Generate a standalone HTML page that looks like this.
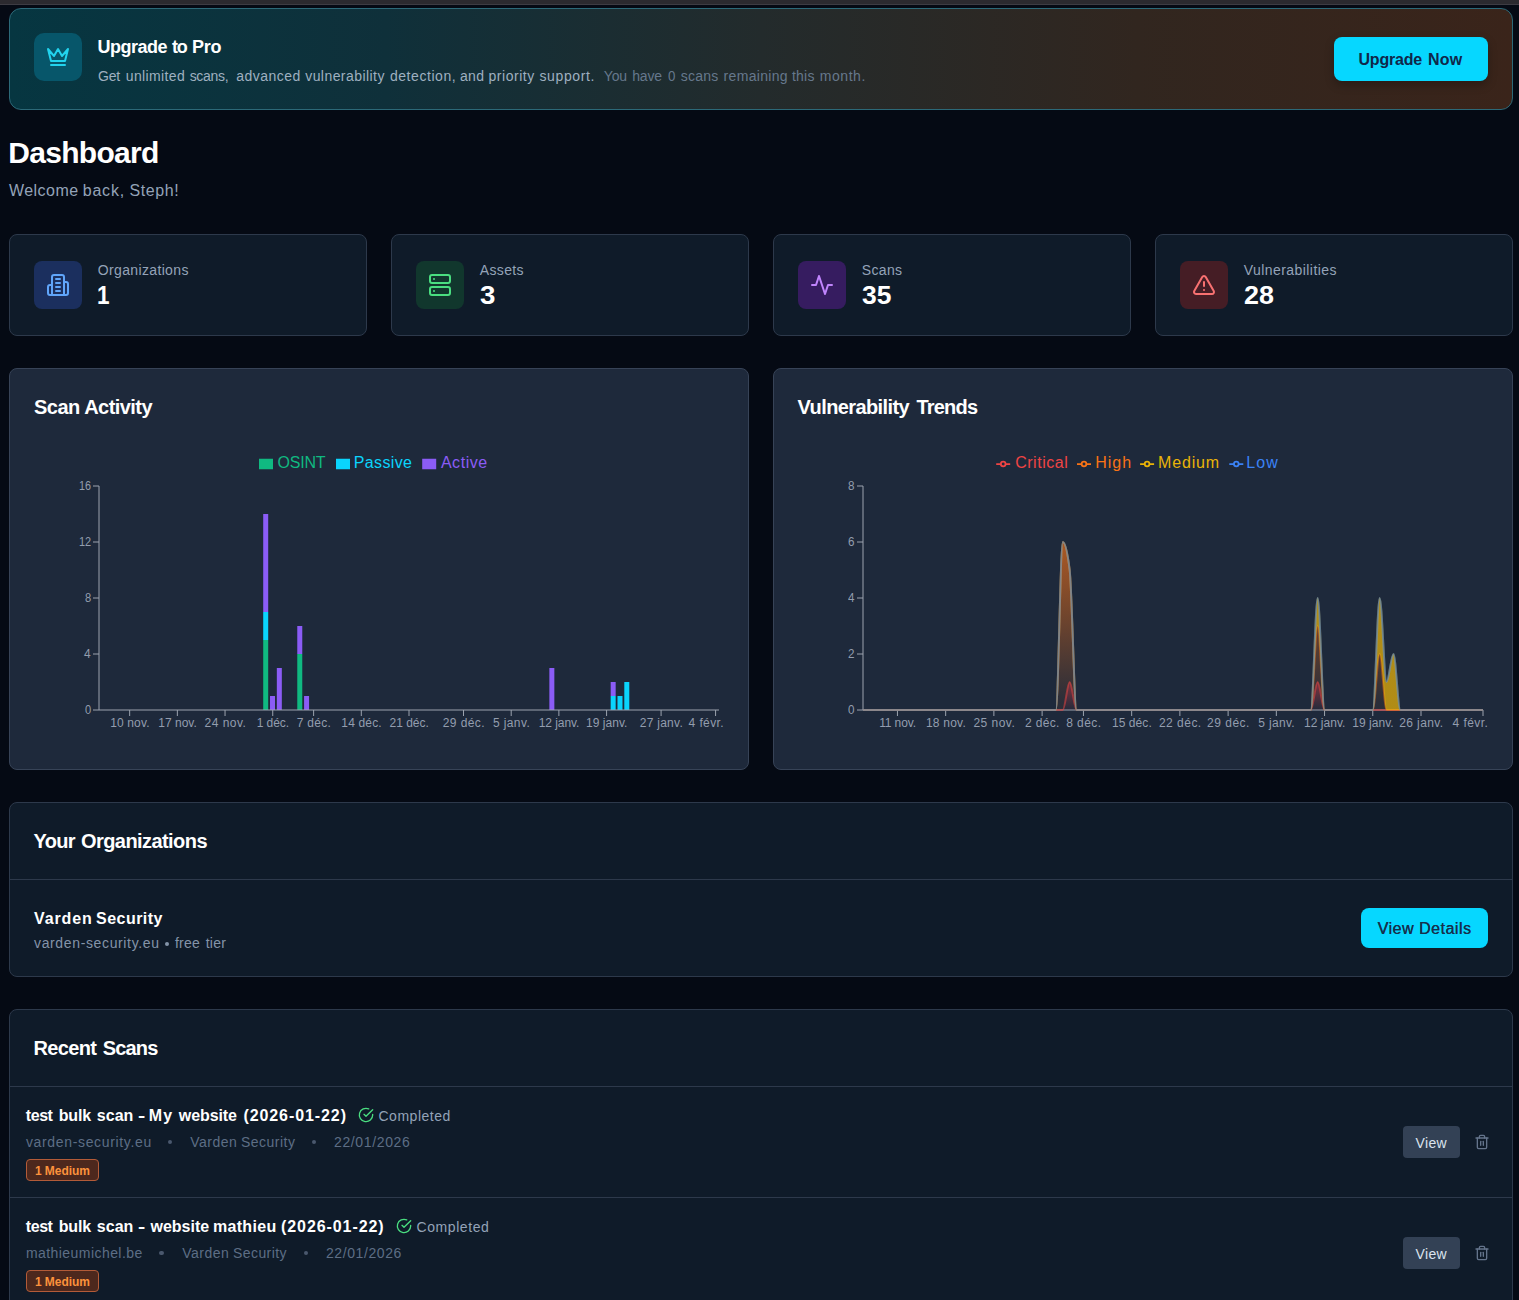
<!DOCTYPE html>
<html lang="en"><head><meta charset="utf-8"><title>Dashboard</title>
<style>
html,body{margin:0;padding:0}
body{width:1519px;height:1300px;overflow:hidden;position:relative;background:#050a14;font-family:"Liberation Sans",sans-serif;}
.t{position:absolute;white-space:nowrap;line-height:1;font-family:"Liberation Sans",sans-serif;}
.b{position:absolute;box-sizing:border-box;}
svg{position:absolute;overflow:visible}
.ic{fill:none;stroke-width:2;stroke-linecap:round;stroke-linejoin:round}
</style></head><body>
<div class="b" style="left:0;top:0;width:1519px;height:4px;background:#2b2a2f"></div>
<div class="b" style="left:0;top:4px;width:1519px;height:1px;background:#3d3c43"></div>
<div class="b" style="left:9px;top:8px;width:1504px;height:102px;border-radius:12px;border:1px solid #2c6978;background:linear-gradient(90deg,#063641 0%,#0f303a 25%,#232b2c 50%,#31261f 75%,#3a241a 100%)"></div>
<div class="b" style="left:34px;top:33px;width:48px;height:48px;border-radius:10px;background:#07566a"></div>
<svg class="ic" style="left:46px;top:45px" width="24" height="24" viewBox="0 0 24 24" stroke="#22d3ee"><path d="m2 4 3 12h14l3-12-6 7-4-7-4 7-6-7z"/><path d="M5 20h14"/></svg>
<div class="t" style="left:97.40px;top:38.00px;font-size:18px;font-weight:700;color:#ffffff;letter-spacing:-0.483px;">Upgrade </div>
<div class="t" style="left:171.90px;top:38.00px;font-size:18px;font-weight:700;color:#ffffff;letter-spacing:-1.094px;">to </div>
<div class="t" style="left:192.10px;top:38.00px;font-size:18px;font-weight:700;color:#ffffff;letter-spacing:-0.255px;">Pro</div>
<div class="t" style="left:98.10px;top:69.00px;font-size:14px;font-weight:400;color:#9fb0c0;letter-spacing:-0.238px;">Get </div>
<div class="t" style="left:125.80px;top:69.00px;font-size:14px;font-weight:400;color:#9fb0c0;letter-spacing:0.37px;">unlimited </div>
<div class="t" style="left:189.70px;top:69.00px;font-size:14px;font-weight:400;color:#9fb0c0;letter-spacing:-0.314px;">scans, </div>
<div class="t" style="left:236.20px;top:69.00px;font-size:14px;font-weight:400;color:#9fb0c0;letter-spacing:0.496px;">advanced </div>
<div class="t" style="left:305.20px;top:69.00px;font-size:14px;font-weight:400;color:#9fb0c0;letter-spacing:0.44px;">vulnerability </div>
<div class="t" style="left:389.90px;top:69.00px;font-size:14px;font-weight:400;color:#9fb0c0;letter-spacing:0.564px;">detection, </div>
<div class="t" style="left:459.90px;top:69.00px;font-size:14px;font-weight:400;color:#9fb0c0;letter-spacing:0.364px;">and </div>
<div class="t" style="left:488.50px;top:69.00px;font-size:14px;font-weight:400;color:#9fb0c0;letter-spacing:0.528px;">priority </div>
<div class="t" style="left:539.50px;top:69.00px;font-size:14px;font-weight:400;color:#9fb0c0;letter-spacing:0.601px;">support.</div>
<div class="t" style="left:603.80px;top:69.00px;font-size:14px;font-weight:400;color:#66788c;letter-spacing:-0.219px;">You </div>
<div class="t" style="left:632.20px;top:69.00px;font-size:14px;font-weight:400;color:#66788c;letter-spacing:-0.191px;">have </div>
<div class="t" style="left:667.80px;top:69.00px;font-size:14px;font-weight:400;color:#66788c;letter-spacing:0px;transform:scaleX(0.9500);transform-origin:0 0;">0 </div>
<div class="t" style="left:680.70px;top:69.00px;font-size:14px;font-weight:400;color:#66788c;letter-spacing:0.257px;">scans </div>
<div class="t" style="left:723.60px;top:69.00px;font-size:14px;font-weight:400;color:#66788c;letter-spacing:0.314px;">remaining </div>
<div class="t" style="left:792.00px;top:69.00px;font-size:14px;font-weight:400;color:#66788c;letter-spacing:0.205px;">this </div>
<div class="t" style="left:819.70px;top:69.00px;font-size:14px;font-weight:400;color:#66788c;letter-spacing:0.578px;">month.</div>
<div class="b" style="left:1334px;top:37px;width:154px;height:44px;border-radius:8px;background:#06d7ff;box-shadow:0 4px 10px rgba(0,0,0,0.25)"></div>
<div class="t" style="left:1358.50px;top:52.00px;font-size:16px;font-weight:700;color:#10274a;letter-spacing:-0.217px;">Upgrade </div>
<div class="t" style="left:1428.00px;top:52.00px;font-size:16px;font-weight:700;color:#10274a;letter-spacing:0.236px;">Now</div>
<div class="t" style="left:8.20px;top:138.00px;font-size:30px;font-weight:700;color:#ffffff;letter-spacing:-0.696px;">Dashboard</div>
<div class="t" style="left:9.00px;top:183.00px;font-size:16px;font-weight:400;color:#94a3b8;letter-spacing:0.451px;">Welcome </div>
<div class="t" style="left:82.70px;top:183.00px;font-size:16px;font-weight:400;color:#94a3b8;letter-spacing:0.801px;">back, </div>
<div class="t" style="left:129.60px;top:183.00px;font-size:16px;font-weight:400;color:#94a3b8;letter-spacing:0.578px;">Steph!</div>
<div class="b" style="left:9px;top:234px;width:358px;height:102px;border-radius:8px;border:1px solid #2d394b;background:#0f1b29"></div>
<div class="b" style="left:34px;top:261px;width:48px;height:48px;border-radius:8px;background:#1b2f5e"></div>
<svg class="ic" style="left:46px;top:273px" width="24" height="24" viewBox="0 0 24 24" stroke="#60a5fa"><path d="M6 22V4a2 2 0 0 1 2-2h8a2 2 0 0 1 2 2v18Z"/><path d="M6 12H4a2 2 0 0 0-2 2v6a2 2 0 0 0 2 2h2"/><path d="M18 9h2a2 2 0 0 1 2 2v9a2 2 0 0 1-2 2h-2"/><path d="M10 6h4"/><path d="M10 10h4"/><path d="M10 14h4"/><path d="M10 18h4"/></svg>
<div class="t" style="left:97.80px;top:263.00px;font-size:14px;font-weight:400;color:#94a3b8;letter-spacing:0.352px;">Organizations</div>
<div class="t" style="left:97.10px;top:283.00px;font-size:25px;font-weight:700;color:#ffffff;letter-spacing:0px;transform:scaleX(0.9000);transform-origin:0 0;">1</div>
<div class="b" style="left:391px;top:234px;width:358px;height:102px;border-radius:8px;border:1px solid #2d394b;background:#0f1b29"></div>
<div class="b" style="left:416px;top:261px;width:48px;height:48px;border-radius:8px;background:#11372d"></div>
<svg class="ic" style="left:428px;top:273px" width="24" height="24" viewBox="0 0 24 24" stroke="#4ade80"><rect width="20" height="8" x="2" y="2" rx="2" ry="2"/><rect width="20" height="8" x="2" y="14" rx="2" ry="2"/><line x1="6" x2="6.01" y1="6" y2="6"/><line x1="6" x2="6.01" y1="18" y2="18"/></svg>
<div class="t" style="left:479.80px;top:263.00px;font-size:14px;font-weight:400;color:#94a3b8;letter-spacing:0.357px;">Assets</div>
<div class="t" style="left:480.00px;top:283.00px;font-size:25px;font-weight:700;color:#ffffff;letter-spacing:0px;transform:scaleX(1.1077);transform-origin:0 0;">3</div>
<div class="b" style="left:773px;top:234px;width:358px;height:102px;border-radius:8px;border:1px solid #2d394b;background:#0f1b29"></div>
<div class="b" style="left:798px;top:261px;width:48px;height:48px;border-radius:8px;background:#361c60"></div>
<svg class="ic" style="left:810px;top:273px" width="24" height="24" viewBox="0 0 24 24" stroke="#c084fc"><path d="M22 12h-4l-3 9L9 3l-3 9H2"/></svg>
<div class="t" style="left:861.80px;top:263.00px;font-size:14px;font-weight:400;color:#94a3b8;letter-spacing:0.322px;">Scans</div>
<div class="t" style="left:862.00px;top:283.00px;font-size:25px;font-weight:700;color:#ffffff;letter-spacing:0px;transform:scaleX(1.0572);transform-origin:0 0;">35</div>
<div class="b" style="left:1155px;top:234px;width:358px;height:102px;border-radius:8px;border:1px solid #2d394b;background:#0f1b29"></div>
<div class="b" style="left:1180px;top:261px;width:48px;height:48px;border-radius:8px;background:#451d25"></div>
<svg class="ic" style="left:1192px;top:273px" width="24" height="24" viewBox="0 0 24 24" stroke="#f87171"><path d="m21.73 18-8-14a2 2 0 0 0-3.48 0l-8 14A2 2 0 0 0 4 21h16a2 2 0 0 0 1.73-3Z"/><path d="M12 9v4"/><path d="M12 17h.01"/></svg>
<div class="t" style="left:1243.80px;top:263.00px;font-size:14px;font-weight:400;color:#94a3b8;letter-spacing:0.433px;">Vulnerabilities</div>
<div class="t" style="left:1244.00px;top:283.00px;font-size:25px;font-weight:700;color:#ffffff;letter-spacing:0px;transform:scaleX(1.0751);transform-origin:0 0;">28</div>
<div class="b" style="left:9px;top:368px;width:740px;height:402px;border-radius:8px;border:1px solid #374357;background:#1e293b"></div>
<div class="t" style="left:34.00px;top:397.00px;font-size:20px;font-weight:700;color:#ffffff;letter-spacing:-0.529px;">Scan </div>
<div class="t" style="left:84.20px;top:397.00px;font-size:20px;font-weight:700;color:#ffffff;letter-spacing:-0.546px;">Activity</div>
<div class="b" style="left:773px;top:368px;width:740px;height:402px;border-radius:8px;border:1px solid #374357;background:#1e293b"></div>
<div class="t" style="left:797.60px;top:397.00px;font-size:20px;font-weight:700;color:#ffffff;letter-spacing:-0.605px;">Vulnerability </div>
<div class="t" style="left:916.40px;top:397.00px;font-size:20px;font-weight:700;color:#ffffff;letter-spacing:-0.771px;">Trends</div>
<svg style="left:0;top:0" width="1519" height="1300" viewBox="0 0 1519 1300">
<rect x="263.198" y="640" width="5" height="70" fill="#10b981"/>
<rect x="263.198" y="612" width="5" height="28" fill="#0ad4fd"/>
<rect x="263.198" y="514" width="5" height="98" fill="#8b5cf6"/>
<rect x="270.011" y="696" width="5" height="14" fill="#8b5cf6"/>
<rect x="276.824" y="668" width="5" height="42" fill="#8b5cf6"/>
<rect x="297.264" y="654" width="5" height="56" fill="#10b981"/>
<rect x="297.264" y="626" width="5" height="28" fill="#8b5cf6"/>
<rect x="304.077" y="696" width="5" height="14" fill="#8b5cf6"/>
<rect x="549.352" y="668" width="5" height="42" fill="#8b5cf6"/>
<rect x="610.670" y="696" width="5" height="14" fill="#0ad4fd"/>
<rect x="610.670" y="682" width="5" height="14" fill="#8b5cf6"/>
<rect x="617.484" y="696" width="5" height="14" fill="#0ad4fd"/>
<rect x="624.297" y="682" width="5" height="28" fill="#0ad4fd"/>
<g stroke="#9ca3af" stroke-width="1" fill="none">
<line x1="99" y1="710" x2="719" y2="710"/>
<line x1="99" y1="486" x2="99" y2="710"/>
<line x1="93" y1="710" x2="99" y2="710"/>
<line x1="93" y1="654" x2="99" y2="654"/>
<line x1="93" y1="598" x2="99" y2="598"/>
<line x1="93" y1="542" x2="99" y2="542"/>
<line x1="93" y1="486" x2="99" y2="486"/>
<line x1="129.659" y1="710" x2="129.659" y2="716"/>
<line x1="177.352" y1="710" x2="177.352" y2="716"/>
<line x1="225.044" y1="710" x2="225.044" y2="716"/>
<line x1="272.736" y1="710" x2="272.736" y2="716"/>
<line x1="313.615" y1="710" x2="313.615" y2="716"/>
<line x1="361.308" y1="710" x2="361.308" y2="716"/>
<line x1="409.000" y1="710" x2="409.000" y2="716"/>
<line x1="463.505" y1="710" x2="463.505" y2="716"/>
<line x1="511.198" y1="710" x2="511.198" y2="716"/>
<line x1="558.890" y1="710" x2="558.890" y2="716"/>
<line x1="606.582" y1="710" x2="606.582" y2="716"/>
<line x1="661.088" y1="710" x2="661.088" y2="716"/>
<line x1="715.593" y1="710" x2="715.593" y2="716"/>
</g>
<rect x="259" y="458.75" width="14" height="10.5" fill="#10b981"/>
<rect x="336" y="458.75" width="14" height="10.5" fill="#0ad4fd"/>
<rect x="422.2" y="458.75" width="14" height="10.5" fill="#8b5cf6"/>
</svg>
<div class="t" style="left:110.16px;top:717.00px;font-size:12px;font-weight:400;color:#939dae;letter-spacing:0.144px;">10 nov.</div>
<div class="t" style="left:158.20px;top:717.00px;font-size:12px;font-weight:400;color:#939dae;letter-spacing:0.027px;">17 nov.</div>
<div class="t" style="left:204.59px;top:717.00px;font-size:12px;font-weight:400;color:#939dae;letter-spacing:0.46px;">24 nov.</div>
<div class="t" style="left:256.64px;top:717.00px;font-size:12px;font-weight:400;color:#939dae;letter-spacing:-0.031px;">1 déc.</div>
<div class="t" style="left:296.67px;top:717.00px;font-size:12px;font-weight:400;color:#939dae;letter-spacing:0.309px;">7 déc.</div>
<div class="t" style="left:341.31px;top:717.00px;font-size:12px;font-weight:400;color:#939dae;letter-spacing:0.162px;">14 déc.</div>
<div class="t" style="left:389.50px;top:717.00px;font-size:12px;font-weight:400;color:#939dae;letter-spacing:-0.005px;">21 déc.</div>
<div class="t" style="left:442.76px;top:717.00px;font-size:12px;font-weight:400;color:#939dae;letter-spacing:0.412px;">29 déc.</div>
<div class="t" style="left:493.00px;top:717.00px;font-size:12px;font-weight:400;color:#939dae;letter-spacing:0.378px;">5 janv.</div>
<div class="t" style="left:538.69px;top:717.00px;font-size:12px;font-weight:400;color:#939dae;letter-spacing:-0.058px;">12 janv.</div>
<div class="t" style="left:586.03px;top:717.00px;font-size:12px;font-weight:400;color:#939dae;letter-spacing:0.042px;">19 janv.</div>
<div class="t" style="left:639.79px;top:717.00px;font-size:12px;font-weight:400;color:#939dae;letter-spacing:0.256px;">27 janv.</div>
<div class="t" style="left:688.60px;top:717.00px;font-size:12px;font-weight:400;color:#939dae;letter-spacing:0.392px;">4 févr.</div>
<div class="t" style="left:84.50px;top:704.00px;font-size:12px;font-weight:400;color:#939dae;letter-spacing:0px;transform:scaleX(0.9286);transform-origin:0 0;">0</div>
<div class="t" style="left:84.00px;top:648.00px;font-size:12px;font-weight:400;color:#939dae;letter-spacing:0px;transform:scaleX(1.0000);transform-origin:0 0;">4</div>
<div class="t" style="left:84.50px;top:592.00px;font-size:12px;font-weight:400;color:#939dae;letter-spacing:0px;transform:scaleX(0.9286);transform-origin:0 0;">8</div>
<div class="t" style="left:78.50px;top:536.00px;font-size:12px;font-weight:400;color:#939dae;letter-spacing:0px;transform:scaleX(0.9142);transform-origin:0 0;">12</div>
<div class="t" style="left:79.00px;top:480.00px;font-size:12px;font-weight:400;color:#939dae;letter-spacing:0px;transform:scaleX(0.9000);transform-origin:0 0;">16</div>
<div class="t" style="left:277.60px;top:455.00px;font-size:16px;font-weight:400;color:#10b981;letter-spacing:-0.254px;">OSINT</div>
<div class="t" style="left:353.70px;top:455.00px;font-size:16px;font-weight:400;color:#0ad4fd;letter-spacing:0.379px;">Passive</div>
<div class="t" style="left:440.90px;top:455.00px;font-size:16px;font-weight:400;color:#8b5cf6;letter-spacing:0.546px;">Active</div>
<svg style="left:0;top:0" width="1519" height="1300" viewBox="0 0 1519 1300">
<defs>
<linearGradient id="gC" x1="0" y1="0" x2="0" y2="1"><stop offset="5%" stop-color="#ef4444" stop-opacity="0.45"/><stop offset="95%" stop-color="#ef4444" stop-opacity="0.05"/></linearGradient>
<linearGradient id="gH" x1="0" y1="0" x2="0" y2="1"><stop offset="5%" stop-color="#f97316" stop-opacity="0.62"/><stop offset="95%" stop-color="#f97316" stop-opacity="0.06"/></linearGradient>
<linearGradient id="gM" x1="0" y1="0" x2="0" y2="1"><stop offset="5%" stop-color="#eab308" stop-opacity="0.72"/><stop offset="95%" stop-color="#eab308" stop-opacity="0.72"/></linearGradient>
<linearGradient id="gL" x1="0" y1="0" x2="0" y2="1"><stop offset="5%" stop-color="#3b82f6" stop-opacity="0.62"/><stop offset="95%" stop-color="#3b82f6" stop-opacity="0.06"/></linearGradient>
</defs>
<g stroke="#9ca3af" stroke-width="1" fill="none">
<line x1="863" y1="710" x2="1483" y2="710"/>
<line x1="863" y1="486" x2="863" y2="710"/>
<line x1="857" y1="710" x2="863" y2="710"/>
<line x1="857" y1="654" x2="863" y2="654"/>
<line x1="857" y1="598" x2="863" y2="598"/>
<line x1="857" y1="542" x2="863" y2="542"/>
<line x1="857" y1="486" x2="863" y2="486"/>
<line x1="897.444" y1="710" x2="897.444" y2="716"/>
<line x1="945.667" y1="710" x2="945.667" y2="716"/>
<line x1="993.889" y1="710" x2="993.889" y2="716"/>
<line x1="1042.111" y1="710" x2="1042.111" y2="716"/>
<line x1="1083.444" y1="710" x2="1083.444" y2="716"/>
<line x1="1131.667" y1="710" x2="1131.667" y2="716"/>
<line x1="1179.889" y1="710" x2="1179.889" y2="716"/>
<line x1="1228.111" y1="710" x2="1228.111" y2="716"/>
<line x1="1276.333" y1="710" x2="1276.333" y2="716"/>
<line x1="1324.556" y1="710" x2="1324.556" y2="716"/>
<line x1="1372.778" y1="710" x2="1372.778" y2="716"/>
<line x1="1421.000" y1="710" x2="1421.000" y2="716"/>
<line x1="1483.000" y1="710" x2="1483.000" y2="716"/>
</g>
<path d="M863.000,710.000C865.296,710.000,867.593,710.000,869.889,710.000C872.185,710.000,874.481,710.000,876.778,710.000C879.074,710.000,881.370,710.000,883.667,710.000C885.963,710.000,888.259,710.000,890.556,710.000C892.852,710.000,895.148,710.000,897.444,710.000C899.741,710.000,902.037,710.000,904.333,710.000C906.630,710.000,908.926,710.000,911.222,710.000C913.519,710.000,915.815,710.000,918.111,710.000C920.407,710.000,922.704,710.000,925.000,710.000C927.296,710.000,929.593,710.000,931.889,710.000C934.185,710.000,936.481,710.000,938.778,710.000C941.074,710.000,943.370,710.000,945.667,710.000C947.963,710.000,950.259,710.000,952.556,710.000C954.852,710.000,957.148,710.000,959.444,710.000C961.741,710.000,964.037,710.000,966.333,710.000C968.630,710.000,970.926,710.000,973.222,710.000C975.519,710.000,977.815,710.000,980.111,710.000C982.407,710.000,984.704,710.000,987.000,710.000C989.296,710.000,991.593,710.000,993.889,710.000C996.185,710.000,998.481,710.000,1000.778,710.000C1003.074,710.000,1005.370,710.000,1007.667,710.000C1009.963,710.000,1012.259,710.000,1014.556,710.000C1016.852,710.000,1019.148,710.000,1021.444,710.000C1023.741,710.000,1026.037,710.000,1028.333,710.000C1030.630,710.000,1032.926,710.000,1035.222,710.000C1037.519,710.000,1039.815,710.000,1042.111,710.000C1044.407,710.000,1046.704,710.000,1049.000,710.000C1051.296,710.000,1053.593,710.000,1055.889,710.000C1058.185,710.000,1060.481,710.000,1062.778,710.000C1065.074,710.000,1067.370,682.000,1069.667,682.000C1071.963,682.000,1074.259,710.000,1076.556,710.000C1078.852,710.000,1081.148,710.000,1083.444,710.000C1085.741,710.000,1088.037,710.000,1090.333,710.000C1092.630,710.000,1094.926,710.000,1097.222,710.000C1099.519,710.000,1101.815,710.000,1104.111,710.000C1106.407,710.000,1108.704,710.000,1111.000,710.000C1113.296,710.000,1115.593,710.000,1117.889,710.000C1120.185,710.000,1122.481,710.000,1124.778,710.000C1127.074,710.000,1129.370,710.000,1131.667,710.000C1133.963,710.000,1136.259,710.000,1138.556,710.000C1140.852,710.000,1143.148,710.000,1145.444,710.000C1147.741,710.000,1150.037,710.000,1152.333,710.000C1154.630,710.000,1156.926,710.000,1159.222,710.000C1161.519,710.000,1163.815,710.000,1166.111,710.000C1168.407,710.000,1170.704,710.000,1173.000,710.000C1175.296,710.000,1177.593,710.000,1179.889,710.000C1182.185,710.000,1184.481,710.000,1186.778,710.000C1189.074,710.000,1191.370,710.000,1193.667,710.000C1195.963,710.000,1198.259,710.000,1200.556,710.000C1202.852,710.000,1205.148,710.000,1207.444,710.000C1209.741,710.000,1212.037,710.000,1214.333,710.000C1216.630,710.000,1218.926,710.000,1221.222,710.000C1223.519,710.000,1225.815,710.000,1228.111,710.000C1230.407,710.000,1232.704,710.000,1235.000,710.000C1237.296,710.000,1239.593,710.000,1241.889,710.000C1244.185,710.000,1246.481,710.000,1248.778,710.000C1251.074,710.000,1253.370,710.000,1255.667,710.000C1257.963,710.000,1260.259,710.000,1262.556,710.000C1264.852,710.000,1267.148,710.000,1269.444,710.000C1271.741,710.000,1274.037,710.000,1276.333,710.000C1278.630,710.000,1280.926,710.000,1283.222,710.000C1285.519,710.000,1287.815,710.000,1290.111,710.000C1292.407,710.000,1294.704,710.000,1297.000,710.000C1299.296,710.000,1301.593,710.000,1303.889,710.000C1306.185,710.000,1308.481,710.000,1310.778,710.000C1313.074,710.000,1315.370,682.000,1317.667,682.000C1319.963,682.000,1322.259,710.000,1324.556,710.000C1326.852,710.000,1329.148,710.000,1331.444,710.000C1333.741,710.000,1336.037,710.000,1338.333,710.000C1340.630,710.000,1342.926,710.000,1345.222,710.000C1347.519,710.000,1349.815,710.000,1352.111,710.000C1354.407,710.000,1356.704,710.000,1359.000,710.000C1361.296,710.000,1363.593,710.000,1365.889,710.000C1368.185,710.000,1370.481,710.000,1372.778,710.000C1375.074,710.000,1377.370,710.000,1379.667,710.000C1381.963,710.000,1384.259,710.000,1386.556,710.000C1388.852,710.000,1391.148,710.000,1393.444,710.000C1395.741,710.000,1398.037,710.000,1400.333,710.000C1402.630,710.000,1404.926,710.000,1407.222,710.000C1409.519,710.000,1411.815,710.000,1414.111,710.000C1416.407,710.000,1418.704,710.000,1421.000,710.000C1423.296,710.000,1425.593,710.000,1427.889,710.000C1430.185,710.000,1432.481,710.000,1434.778,710.000C1437.074,710.000,1439.370,710.000,1441.667,710.000C1443.963,710.000,1446.259,710.000,1448.556,710.000C1450.852,710.000,1453.148,710.000,1455.444,710.000C1457.741,710.000,1460.037,710.000,1462.333,710.000C1464.630,710.000,1466.926,710.000,1469.222,710.000C1471.519,710.000,1473.815,710.000,1476.111,710.000C1478.407,710.000,1480.704,710.000,1483.000,710.000L1483.000,710.000C1480.704,710.000,1478.407,710.000,1476.111,710.000C1473.815,710.000,1471.519,710.000,1469.222,710.000C1466.926,710.000,1464.630,710.000,1462.333,710.000C1460.037,710.000,1457.741,710.000,1455.444,710.000C1453.148,710.000,1450.852,710.000,1448.556,710.000C1446.259,710.000,1443.963,710.000,1441.667,710.000C1439.370,710.000,1437.074,710.000,1434.778,710.000C1432.481,710.000,1430.185,710.000,1427.889,710.000C1425.593,710.000,1423.296,710.000,1421.000,710.000C1418.704,710.000,1416.407,710.000,1414.111,710.000C1411.815,710.000,1409.519,710.000,1407.222,710.000C1404.926,710.000,1402.630,710.000,1400.333,710.000C1398.037,710.000,1395.741,710.000,1393.444,710.000C1391.148,710.000,1388.852,710.000,1386.556,710.000C1384.259,710.000,1381.963,710.000,1379.667,710.000C1377.370,710.000,1375.074,710.000,1372.778,710.000C1370.481,710.000,1368.185,710.000,1365.889,710.000C1363.593,710.000,1361.296,710.000,1359.000,710.000C1356.704,710.000,1354.407,710.000,1352.111,710.000C1349.815,710.000,1347.519,710.000,1345.222,710.000C1342.926,710.000,1340.630,710.000,1338.333,710.000C1336.037,710.000,1333.741,710.000,1331.444,710.000C1329.148,710.000,1326.852,710.000,1324.556,710.000C1322.259,710.000,1319.963,710.000,1317.667,710.000C1315.370,710.000,1313.074,710.000,1310.778,710.000C1308.481,710.000,1306.185,710.000,1303.889,710.000C1301.593,710.000,1299.296,710.000,1297.000,710.000C1294.704,710.000,1292.407,710.000,1290.111,710.000C1287.815,710.000,1285.519,710.000,1283.222,710.000C1280.926,710.000,1278.630,710.000,1276.333,710.000C1274.037,710.000,1271.741,710.000,1269.444,710.000C1267.148,710.000,1264.852,710.000,1262.556,710.000C1260.259,710.000,1257.963,710.000,1255.667,710.000C1253.370,710.000,1251.074,710.000,1248.778,710.000C1246.481,710.000,1244.185,710.000,1241.889,710.000C1239.593,710.000,1237.296,710.000,1235.000,710.000C1232.704,710.000,1230.407,710.000,1228.111,710.000C1225.815,710.000,1223.519,710.000,1221.222,710.000C1218.926,710.000,1216.630,710.000,1214.333,710.000C1212.037,710.000,1209.741,710.000,1207.444,710.000C1205.148,710.000,1202.852,710.000,1200.556,710.000C1198.259,710.000,1195.963,710.000,1193.667,710.000C1191.370,710.000,1189.074,710.000,1186.778,710.000C1184.481,710.000,1182.185,710.000,1179.889,710.000C1177.593,710.000,1175.296,710.000,1173.000,710.000C1170.704,710.000,1168.407,710.000,1166.111,710.000C1163.815,710.000,1161.519,710.000,1159.222,710.000C1156.926,710.000,1154.630,710.000,1152.333,710.000C1150.037,710.000,1147.741,710.000,1145.444,710.000C1143.148,710.000,1140.852,710.000,1138.556,710.000C1136.259,710.000,1133.963,710.000,1131.667,710.000C1129.370,710.000,1127.074,710.000,1124.778,710.000C1122.481,710.000,1120.185,710.000,1117.889,710.000C1115.593,710.000,1113.296,710.000,1111.000,710.000C1108.704,710.000,1106.407,710.000,1104.111,710.000C1101.815,710.000,1099.519,710.000,1097.222,710.000C1094.926,710.000,1092.630,710.000,1090.333,710.000C1088.037,710.000,1085.741,710.000,1083.444,710.000C1081.148,710.000,1078.852,710.000,1076.556,710.000C1074.259,710.000,1071.963,710.000,1069.667,710.000C1067.370,710.000,1065.074,710.000,1062.778,710.000C1060.481,710.000,1058.185,710.000,1055.889,710.000C1053.593,710.000,1051.296,710.000,1049.000,710.000C1046.704,710.000,1044.407,710.000,1042.111,710.000C1039.815,710.000,1037.519,710.000,1035.222,710.000C1032.926,710.000,1030.630,710.000,1028.333,710.000C1026.037,710.000,1023.741,710.000,1021.444,710.000C1019.148,710.000,1016.852,710.000,1014.556,710.000C1012.259,710.000,1009.963,710.000,1007.667,710.000C1005.370,710.000,1003.074,710.000,1000.778,710.000C998.481,710.000,996.185,710.000,993.889,710.000C991.593,710.000,989.296,710.000,987.000,710.000C984.704,710.000,982.407,710.000,980.111,710.000C977.815,710.000,975.519,710.000,973.222,710.000C970.926,710.000,968.630,710.000,966.333,710.000C964.037,710.000,961.741,710.000,959.444,710.000C957.148,710.000,954.852,710.000,952.556,710.000C950.259,710.000,947.963,710.000,945.667,710.000C943.370,710.000,941.074,710.000,938.778,710.000C936.481,710.000,934.185,710.000,931.889,710.000C929.593,710.000,927.296,710.000,925.000,710.000C922.704,710.000,920.407,710.000,918.111,710.000C915.815,710.000,913.519,710.000,911.222,710.000C908.926,710.000,906.630,710.000,904.333,710.000C902.037,710.000,899.741,710.000,897.444,710.000C895.148,710.000,892.852,710.000,890.556,710.000C888.259,710.000,885.963,710.000,883.667,710.000C881.370,710.000,879.074,710.000,876.778,710.000C874.481,710.000,872.185,710.000,869.889,710.000C867.593,710.000,865.296,710.000,863.000,710.000Z" fill="url(#gC)" stroke="none"/>
<path d="M863.000,710.000C865.296,710.000,867.593,710.000,869.889,710.000C872.185,710.000,874.481,710.000,876.778,710.000C879.074,710.000,881.370,710.000,883.667,710.000C885.963,710.000,888.259,710.000,890.556,710.000C892.852,710.000,895.148,710.000,897.444,710.000C899.741,710.000,902.037,710.000,904.333,710.000C906.630,710.000,908.926,710.000,911.222,710.000C913.519,710.000,915.815,710.000,918.111,710.000C920.407,710.000,922.704,710.000,925.000,710.000C927.296,710.000,929.593,710.000,931.889,710.000C934.185,710.000,936.481,710.000,938.778,710.000C941.074,710.000,943.370,710.000,945.667,710.000C947.963,710.000,950.259,710.000,952.556,710.000C954.852,710.000,957.148,710.000,959.444,710.000C961.741,710.000,964.037,710.000,966.333,710.000C968.630,710.000,970.926,710.000,973.222,710.000C975.519,710.000,977.815,710.000,980.111,710.000C982.407,710.000,984.704,710.000,987.000,710.000C989.296,710.000,991.593,710.000,993.889,710.000C996.185,710.000,998.481,710.000,1000.778,710.000C1003.074,710.000,1005.370,710.000,1007.667,710.000C1009.963,710.000,1012.259,710.000,1014.556,710.000C1016.852,710.000,1019.148,710.000,1021.444,710.000C1023.741,710.000,1026.037,710.000,1028.333,710.000C1030.630,710.000,1032.926,710.000,1035.222,710.000C1037.519,710.000,1039.815,710.000,1042.111,710.000C1044.407,710.000,1046.704,710.000,1049.000,710.000C1051.296,710.000,1053.593,710.000,1055.889,710.000C1058.185,710.000,1060.481,710.000,1062.778,710.000C1065.074,710.000,1067.370,682.000,1069.667,682.000C1071.963,682.000,1074.259,710.000,1076.556,710.000C1078.852,710.000,1081.148,710.000,1083.444,710.000C1085.741,710.000,1088.037,710.000,1090.333,710.000C1092.630,710.000,1094.926,710.000,1097.222,710.000C1099.519,710.000,1101.815,710.000,1104.111,710.000C1106.407,710.000,1108.704,710.000,1111.000,710.000C1113.296,710.000,1115.593,710.000,1117.889,710.000C1120.185,710.000,1122.481,710.000,1124.778,710.000C1127.074,710.000,1129.370,710.000,1131.667,710.000C1133.963,710.000,1136.259,710.000,1138.556,710.000C1140.852,710.000,1143.148,710.000,1145.444,710.000C1147.741,710.000,1150.037,710.000,1152.333,710.000C1154.630,710.000,1156.926,710.000,1159.222,710.000C1161.519,710.000,1163.815,710.000,1166.111,710.000C1168.407,710.000,1170.704,710.000,1173.000,710.000C1175.296,710.000,1177.593,710.000,1179.889,710.000C1182.185,710.000,1184.481,710.000,1186.778,710.000C1189.074,710.000,1191.370,710.000,1193.667,710.000C1195.963,710.000,1198.259,710.000,1200.556,710.000C1202.852,710.000,1205.148,710.000,1207.444,710.000C1209.741,710.000,1212.037,710.000,1214.333,710.000C1216.630,710.000,1218.926,710.000,1221.222,710.000C1223.519,710.000,1225.815,710.000,1228.111,710.000C1230.407,710.000,1232.704,710.000,1235.000,710.000C1237.296,710.000,1239.593,710.000,1241.889,710.000C1244.185,710.000,1246.481,710.000,1248.778,710.000C1251.074,710.000,1253.370,710.000,1255.667,710.000C1257.963,710.000,1260.259,710.000,1262.556,710.000C1264.852,710.000,1267.148,710.000,1269.444,710.000C1271.741,710.000,1274.037,710.000,1276.333,710.000C1278.630,710.000,1280.926,710.000,1283.222,710.000C1285.519,710.000,1287.815,710.000,1290.111,710.000C1292.407,710.000,1294.704,710.000,1297.000,710.000C1299.296,710.000,1301.593,710.000,1303.889,710.000C1306.185,710.000,1308.481,710.000,1310.778,710.000C1313.074,710.000,1315.370,682.000,1317.667,682.000C1319.963,682.000,1322.259,710.000,1324.556,710.000C1326.852,710.000,1329.148,710.000,1331.444,710.000C1333.741,710.000,1336.037,710.000,1338.333,710.000C1340.630,710.000,1342.926,710.000,1345.222,710.000C1347.519,710.000,1349.815,710.000,1352.111,710.000C1354.407,710.000,1356.704,710.000,1359.000,710.000C1361.296,710.000,1363.593,710.000,1365.889,710.000C1368.185,710.000,1370.481,710.000,1372.778,710.000C1375.074,710.000,1377.370,710.000,1379.667,710.000C1381.963,710.000,1384.259,710.000,1386.556,710.000C1388.852,710.000,1391.148,710.000,1393.444,710.000C1395.741,710.000,1398.037,710.000,1400.333,710.000C1402.630,710.000,1404.926,710.000,1407.222,710.000C1409.519,710.000,1411.815,710.000,1414.111,710.000C1416.407,710.000,1418.704,710.000,1421.000,710.000C1423.296,710.000,1425.593,710.000,1427.889,710.000C1430.185,710.000,1432.481,710.000,1434.778,710.000C1437.074,710.000,1439.370,710.000,1441.667,710.000C1443.963,710.000,1446.259,710.000,1448.556,710.000C1450.852,710.000,1453.148,710.000,1455.444,710.000C1457.741,710.000,1460.037,710.000,1462.333,710.000C1464.630,710.000,1466.926,710.000,1469.222,710.000C1471.519,710.000,1473.815,710.000,1476.111,710.000C1478.407,710.000,1480.704,710.000,1483.000,710.000" fill="none" stroke="#ef4444" stroke-width="2" stroke-opacity="0.5"/>
<path d="M863.000,710.000C865.296,710.000,867.593,710.000,869.889,710.000C872.185,710.000,874.481,710.000,876.778,710.000C879.074,710.000,881.370,710.000,883.667,710.000C885.963,710.000,888.259,710.000,890.556,710.000C892.852,710.000,895.148,710.000,897.444,710.000C899.741,710.000,902.037,710.000,904.333,710.000C906.630,710.000,908.926,710.000,911.222,710.000C913.519,710.000,915.815,710.000,918.111,710.000C920.407,710.000,922.704,710.000,925.000,710.000C927.296,710.000,929.593,710.000,931.889,710.000C934.185,710.000,936.481,710.000,938.778,710.000C941.074,710.000,943.370,710.000,945.667,710.000C947.963,710.000,950.259,710.000,952.556,710.000C954.852,710.000,957.148,710.000,959.444,710.000C961.741,710.000,964.037,710.000,966.333,710.000C968.630,710.000,970.926,710.000,973.222,710.000C975.519,710.000,977.815,710.000,980.111,710.000C982.407,710.000,984.704,710.000,987.000,710.000C989.296,710.000,991.593,710.000,993.889,710.000C996.185,710.000,998.481,710.000,1000.778,710.000C1003.074,710.000,1005.370,710.000,1007.667,710.000C1009.963,710.000,1012.259,710.000,1014.556,710.000C1016.852,710.000,1019.148,710.000,1021.444,710.000C1023.741,710.000,1026.037,710.000,1028.333,710.000C1030.630,710.000,1032.926,710.000,1035.222,710.000C1037.519,710.000,1039.815,710.000,1042.111,710.000C1044.407,710.000,1046.704,710.000,1049.000,710.000C1051.296,710.000,1053.593,710.000,1055.889,710.000C1058.185,710.000,1060.481,542.000,1062.778,542.000C1065.074,542.000,1067.370,551.333,1069.667,570.000C1071.963,588.667,1074.259,710.000,1076.556,710.000C1078.852,710.000,1081.148,710.000,1083.444,710.000C1085.741,710.000,1088.037,710.000,1090.333,710.000C1092.630,710.000,1094.926,710.000,1097.222,710.000C1099.519,710.000,1101.815,710.000,1104.111,710.000C1106.407,710.000,1108.704,710.000,1111.000,710.000C1113.296,710.000,1115.593,710.000,1117.889,710.000C1120.185,710.000,1122.481,710.000,1124.778,710.000C1127.074,710.000,1129.370,710.000,1131.667,710.000C1133.963,710.000,1136.259,710.000,1138.556,710.000C1140.852,710.000,1143.148,710.000,1145.444,710.000C1147.741,710.000,1150.037,710.000,1152.333,710.000C1154.630,710.000,1156.926,710.000,1159.222,710.000C1161.519,710.000,1163.815,710.000,1166.111,710.000C1168.407,710.000,1170.704,710.000,1173.000,710.000C1175.296,710.000,1177.593,710.000,1179.889,710.000C1182.185,710.000,1184.481,710.000,1186.778,710.000C1189.074,710.000,1191.370,710.000,1193.667,710.000C1195.963,710.000,1198.259,710.000,1200.556,710.000C1202.852,710.000,1205.148,710.000,1207.444,710.000C1209.741,710.000,1212.037,710.000,1214.333,710.000C1216.630,710.000,1218.926,710.000,1221.222,710.000C1223.519,710.000,1225.815,710.000,1228.111,710.000C1230.407,710.000,1232.704,710.000,1235.000,710.000C1237.296,710.000,1239.593,710.000,1241.889,710.000C1244.185,710.000,1246.481,710.000,1248.778,710.000C1251.074,710.000,1253.370,710.000,1255.667,710.000C1257.963,710.000,1260.259,710.000,1262.556,710.000C1264.852,710.000,1267.148,710.000,1269.444,710.000C1271.741,710.000,1274.037,710.000,1276.333,710.000C1278.630,710.000,1280.926,710.000,1283.222,710.000C1285.519,710.000,1287.815,710.000,1290.111,710.000C1292.407,710.000,1294.704,710.000,1297.000,710.000C1299.296,710.000,1301.593,710.000,1303.889,710.000C1306.185,710.000,1308.481,710.000,1310.778,710.000C1313.074,710.000,1315.370,626.000,1317.667,626.000C1319.963,626.000,1322.259,710.000,1324.556,710.000C1326.852,710.000,1329.148,710.000,1331.444,710.000C1333.741,710.000,1336.037,710.000,1338.333,710.000C1340.630,710.000,1342.926,710.000,1345.222,710.000C1347.519,710.000,1349.815,710.000,1352.111,710.000C1354.407,710.000,1356.704,710.000,1359.000,710.000C1361.296,710.000,1363.593,710.000,1365.889,710.000C1368.185,710.000,1370.481,710.000,1372.778,710.000C1375.074,710.000,1377.370,654.000,1379.667,654.000C1381.963,654.000,1384.259,710.000,1386.556,710.000C1388.852,710.000,1391.148,710.000,1393.444,710.000C1395.741,710.000,1398.037,710.000,1400.333,710.000C1402.630,710.000,1404.926,710.000,1407.222,710.000C1409.519,710.000,1411.815,710.000,1414.111,710.000C1416.407,710.000,1418.704,710.000,1421.000,710.000C1423.296,710.000,1425.593,710.000,1427.889,710.000C1430.185,710.000,1432.481,710.000,1434.778,710.000C1437.074,710.000,1439.370,710.000,1441.667,710.000C1443.963,710.000,1446.259,710.000,1448.556,710.000C1450.852,710.000,1453.148,710.000,1455.444,710.000C1457.741,710.000,1460.037,710.000,1462.333,710.000C1464.630,710.000,1466.926,710.000,1469.222,710.000C1471.519,710.000,1473.815,710.000,1476.111,710.000C1478.407,710.000,1480.704,710.000,1483.000,710.000L1483.000,710.000C1480.704,710.000,1478.407,710.000,1476.111,710.000C1473.815,710.000,1471.519,710.000,1469.222,710.000C1466.926,710.000,1464.630,710.000,1462.333,710.000C1460.037,710.000,1457.741,710.000,1455.444,710.000C1453.148,710.000,1450.852,710.000,1448.556,710.000C1446.259,710.000,1443.963,710.000,1441.667,710.000C1439.370,710.000,1437.074,710.000,1434.778,710.000C1432.481,710.000,1430.185,710.000,1427.889,710.000C1425.593,710.000,1423.296,710.000,1421.000,710.000C1418.704,710.000,1416.407,710.000,1414.111,710.000C1411.815,710.000,1409.519,710.000,1407.222,710.000C1404.926,710.000,1402.630,710.000,1400.333,710.000C1398.037,710.000,1395.741,710.000,1393.444,710.000C1391.148,710.000,1388.852,710.000,1386.556,710.000C1384.259,710.000,1381.963,710.000,1379.667,710.000C1377.370,710.000,1375.074,710.000,1372.778,710.000C1370.481,710.000,1368.185,710.000,1365.889,710.000C1363.593,710.000,1361.296,710.000,1359.000,710.000C1356.704,710.000,1354.407,710.000,1352.111,710.000C1349.815,710.000,1347.519,710.000,1345.222,710.000C1342.926,710.000,1340.630,710.000,1338.333,710.000C1336.037,710.000,1333.741,710.000,1331.444,710.000C1329.148,710.000,1326.852,710.000,1324.556,710.000C1322.259,710.000,1319.963,682.000,1317.667,682.000C1315.370,682.000,1313.074,710.000,1310.778,710.000C1308.481,710.000,1306.185,710.000,1303.889,710.000C1301.593,710.000,1299.296,710.000,1297.000,710.000C1294.704,710.000,1292.407,710.000,1290.111,710.000C1287.815,710.000,1285.519,710.000,1283.222,710.000C1280.926,710.000,1278.630,710.000,1276.333,710.000C1274.037,710.000,1271.741,710.000,1269.444,710.000C1267.148,710.000,1264.852,710.000,1262.556,710.000C1260.259,710.000,1257.963,710.000,1255.667,710.000C1253.370,710.000,1251.074,710.000,1248.778,710.000C1246.481,710.000,1244.185,710.000,1241.889,710.000C1239.593,710.000,1237.296,710.000,1235.000,710.000C1232.704,710.000,1230.407,710.000,1228.111,710.000C1225.815,710.000,1223.519,710.000,1221.222,710.000C1218.926,710.000,1216.630,710.000,1214.333,710.000C1212.037,710.000,1209.741,710.000,1207.444,710.000C1205.148,710.000,1202.852,710.000,1200.556,710.000C1198.259,710.000,1195.963,710.000,1193.667,710.000C1191.370,710.000,1189.074,710.000,1186.778,710.000C1184.481,710.000,1182.185,710.000,1179.889,710.000C1177.593,710.000,1175.296,710.000,1173.000,710.000C1170.704,710.000,1168.407,710.000,1166.111,710.000C1163.815,710.000,1161.519,710.000,1159.222,710.000C1156.926,710.000,1154.630,710.000,1152.333,710.000C1150.037,710.000,1147.741,710.000,1145.444,710.000C1143.148,710.000,1140.852,710.000,1138.556,710.000C1136.259,710.000,1133.963,710.000,1131.667,710.000C1129.370,710.000,1127.074,710.000,1124.778,710.000C1122.481,710.000,1120.185,710.000,1117.889,710.000C1115.593,710.000,1113.296,710.000,1111.000,710.000C1108.704,710.000,1106.407,710.000,1104.111,710.000C1101.815,710.000,1099.519,710.000,1097.222,710.000C1094.926,710.000,1092.630,710.000,1090.333,710.000C1088.037,710.000,1085.741,710.000,1083.444,710.000C1081.148,710.000,1078.852,710.000,1076.556,710.000C1074.259,710.000,1071.963,682.000,1069.667,682.000C1067.370,682.000,1065.074,710.000,1062.778,710.000C1060.481,710.000,1058.185,710.000,1055.889,710.000C1053.593,710.000,1051.296,710.000,1049.000,710.000C1046.704,710.000,1044.407,710.000,1042.111,710.000C1039.815,710.000,1037.519,710.000,1035.222,710.000C1032.926,710.000,1030.630,710.000,1028.333,710.000C1026.037,710.000,1023.741,710.000,1021.444,710.000C1019.148,710.000,1016.852,710.000,1014.556,710.000C1012.259,710.000,1009.963,710.000,1007.667,710.000C1005.370,710.000,1003.074,710.000,1000.778,710.000C998.481,710.000,996.185,710.000,993.889,710.000C991.593,710.000,989.296,710.000,987.000,710.000C984.704,710.000,982.407,710.000,980.111,710.000C977.815,710.000,975.519,710.000,973.222,710.000C970.926,710.000,968.630,710.000,966.333,710.000C964.037,710.000,961.741,710.000,959.444,710.000C957.148,710.000,954.852,710.000,952.556,710.000C950.259,710.000,947.963,710.000,945.667,710.000C943.370,710.000,941.074,710.000,938.778,710.000C936.481,710.000,934.185,710.000,931.889,710.000C929.593,710.000,927.296,710.000,925.000,710.000C922.704,710.000,920.407,710.000,918.111,710.000C915.815,710.000,913.519,710.000,911.222,710.000C908.926,710.000,906.630,710.000,904.333,710.000C902.037,710.000,899.741,710.000,897.444,710.000C895.148,710.000,892.852,710.000,890.556,710.000C888.259,710.000,885.963,710.000,883.667,710.000C881.370,710.000,879.074,710.000,876.778,710.000C874.481,710.000,872.185,710.000,869.889,710.000C867.593,710.000,865.296,710.000,863.000,710.000Z" fill="url(#gH)" stroke="none"/>
<path d="M863.000,710.000C865.296,710.000,867.593,710.000,869.889,710.000C872.185,710.000,874.481,710.000,876.778,710.000C879.074,710.000,881.370,710.000,883.667,710.000C885.963,710.000,888.259,710.000,890.556,710.000C892.852,710.000,895.148,710.000,897.444,710.000C899.741,710.000,902.037,710.000,904.333,710.000C906.630,710.000,908.926,710.000,911.222,710.000C913.519,710.000,915.815,710.000,918.111,710.000C920.407,710.000,922.704,710.000,925.000,710.000C927.296,710.000,929.593,710.000,931.889,710.000C934.185,710.000,936.481,710.000,938.778,710.000C941.074,710.000,943.370,710.000,945.667,710.000C947.963,710.000,950.259,710.000,952.556,710.000C954.852,710.000,957.148,710.000,959.444,710.000C961.741,710.000,964.037,710.000,966.333,710.000C968.630,710.000,970.926,710.000,973.222,710.000C975.519,710.000,977.815,710.000,980.111,710.000C982.407,710.000,984.704,710.000,987.000,710.000C989.296,710.000,991.593,710.000,993.889,710.000C996.185,710.000,998.481,710.000,1000.778,710.000C1003.074,710.000,1005.370,710.000,1007.667,710.000C1009.963,710.000,1012.259,710.000,1014.556,710.000C1016.852,710.000,1019.148,710.000,1021.444,710.000C1023.741,710.000,1026.037,710.000,1028.333,710.000C1030.630,710.000,1032.926,710.000,1035.222,710.000C1037.519,710.000,1039.815,710.000,1042.111,710.000C1044.407,710.000,1046.704,710.000,1049.000,710.000C1051.296,710.000,1053.593,710.000,1055.889,710.000C1058.185,710.000,1060.481,542.000,1062.778,542.000C1065.074,542.000,1067.370,551.333,1069.667,570.000C1071.963,588.667,1074.259,710.000,1076.556,710.000C1078.852,710.000,1081.148,710.000,1083.444,710.000C1085.741,710.000,1088.037,710.000,1090.333,710.000C1092.630,710.000,1094.926,710.000,1097.222,710.000C1099.519,710.000,1101.815,710.000,1104.111,710.000C1106.407,710.000,1108.704,710.000,1111.000,710.000C1113.296,710.000,1115.593,710.000,1117.889,710.000C1120.185,710.000,1122.481,710.000,1124.778,710.000C1127.074,710.000,1129.370,710.000,1131.667,710.000C1133.963,710.000,1136.259,710.000,1138.556,710.000C1140.852,710.000,1143.148,710.000,1145.444,710.000C1147.741,710.000,1150.037,710.000,1152.333,710.000C1154.630,710.000,1156.926,710.000,1159.222,710.000C1161.519,710.000,1163.815,710.000,1166.111,710.000C1168.407,710.000,1170.704,710.000,1173.000,710.000C1175.296,710.000,1177.593,710.000,1179.889,710.000C1182.185,710.000,1184.481,710.000,1186.778,710.000C1189.074,710.000,1191.370,710.000,1193.667,710.000C1195.963,710.000,1198.259,710.000,1200.556,710.000C1202.852,710.000,1205.148,710.000,1207.444,710.000C1209.741,710.000,1212.037,710.000,1214.333,710.000C1216.630,710.000,1218.926,710.000,1221.222,710.000C1223.519,710.000,1225.815,710.000,1228.111,710.000C1230.407,710.000,1232.704,710.000,1235.000,710.000C1237.296,710.000,1239.593,710.000,1241.889,710.000C1244.185,710.000,1246.481,710.000,1248.778,710.000C1251.074,710.000,1253.370,710.000,1255.667,710.000C1257.963,710.000,1260.259,710.000,1262.556,710.000C1264.852,710.000,1267.148,710.000,1269.444,710.000C1271.741,710.000,1274.037,710.000,1276.333,710.000C1278.630,710.000,1280.926,710.000,1283.222,710.000C1285.519,710.000,1287.815,710.000,1290.111,710.000C1292.407,710.000,1294.704,710.000,1297.000,710.000C1299.296,710.000,1301.593,710.000,1303.889,710.000C1306.185,710.000,1308.481,710.000,1310.778,710.000C1313.074,710.000,1315.370,626.000,1317.667,626.000C1319.963,626.000,1322.259,710.000,1324.556,710.000C1326.852,710.000,1329.148,710.000,1331.444,710.000C1333.741,710.000,1336.037,710.000,1338.333,710.000C1340.630,710.000,1342.926,710.000,1345.222,710.000C1347.519,710.000,1349.815,710.000,1352.111,710.000C1354.407,710.000,1356.704,710.000,1359.000,710.000C1361.296,710.000,1363.593,710.000,1365.889,710.000C1368.185,710.000,1370.481,710.000,1372.778,710.000C1375.074,710.000,1377.370,654.000,1379.667,654.000C1381.963,654.000,1384.259,710.000,1386.556,710.000C1388.852,710.000,1391.148,710.000,1393.444,710.000C1395.741,710.000,1398.037,710.000,1400.333,710.000C1402.630,710.000,1404.926,710.000,1407.222,710.000C1409.519,710.000,1411.815,710.000,1414.111,710.000C1416.407,710.000,1418.704,710.000,1421.000,710.000C1423.296,710.000,1425.593,710.000,1427.889,710.000C1430.185,710.000,1432.481,710.000,1434.778,710.000C1437.074,710.000,1439.370,710.000,1441.667,710.000C1443.963,710.000,1446.259,710.000,1448.556,710.000C1450.852,710.000,1453.148,710.000,1455.444,710.000C1457.741,710.000,1460.037,710.000,1462.333,710.000C1464.630,710.000,1466.926,710.000,1469.222,710.000C1471.519,710.000,1473.815,710.000,1476.111,710.000C1478.407,710.000,1480.704,710.000,1483.000,710.000" fill="none" stroke="#f97316" stroke-width="2" stroke-opacity="0.5"/>
<path d="M863.000,710.000C865.296,710.000,867.593,710.000,869.889,710.000C872.185,710.000,874.481,710.000,876.778,710.000C879.074,710.000,881.370,710.000,883.667,710.000C885.963,710.000,888.259,710.000,890.556,710.000C892.852,710.000,895.148,710.000,897.444,710.000C899.741,710.000,902.037,710.000,904.333,710.000C906.630,710.000,908.926,710.000,911.222,710.000C913.519,710.000,915.815,710.000,918.111,710.000C920.407,710.000,922.704,710.000,925.000,710.000C927.296,710.000,929.593,710.000,931.889,710.000C934.185,710.000,936.481,710.000,938.778,710.000C941.074,710.000,943.370,710.000,945.667,710.000C947.963,710.000,950.259,710.000,952.556,710.000C954.852,710.000,957.148,710.000,959.444,710.000C961.741,710.000,964.037,710.000,966.333,710.000C968.630,710.000,970.926,710.000,973.222,710.000C975.519,710.000,977.815,710.000,980.111,710.000C982.407,710.000,984.704,710.000,987.000,710.000C989.296,710.000,991.593,710.000,993.889,710.000C996.185,710.000,998.481,710.000,1000.778,710.000C1003.074,710.000,1005.370,710.000,1007.667,710.000C1009.963,710.000,1012.259,710.000,1014.556,710.000C1016.852,710.000,1019.148,710.000,1021.444,710.000C1023.741,710.000,1026.037,710.000,1028.333,710.000C1030.630,710.000,1032.926,710.000,1035.222,710.000C1037.519,710.000,1039.815,710.000,1042.111,710.000C1044.407,710.000,1046.704,710.000,1049.000,710.000C1051.296,710.000,1053.593,710.000,1055.889,710.000C1058.185,710.000,1060.481,542.000,1062.778,542.000C1065.074,542.000,1067.370,551.333,1069.667,570.000C1071.963,588.667,1074.259,710.000,1076.556,710.000C1078.852,710.000,1081.148,710.000,1083.444,710.000C1085.741,710.000,1088.037,710.000,1090.333,710.000C1092.630,710.000,1094.926,710.000,1097.222,710.000C1099.519,710.000,1101.815,710.000,1104.111,710.000C1106.407,710.000,1108.704,710.000,1111.000,710.000C1113.296,710.000,1115.593,710.000,1117.889,710.000C1120.185,710.000,1122.481,710.000,1124.778,710.000C1127.074,710.000,1129.370,710.000,1131.667,710.000C1133.963,710.000,1136.259,710.000,1138.556,710.000C1140.852,710.000,1143.148,710.000,1145.444,710.000C1147.741,710.000,1150.037,710.000,1152.333,710.000C1154.630,710.000,1156.926,710.000,1159.222,710.000C1161.519,710.000,1163.815,710.000,1166.111,710.000C1168.407,710.000,1170.704,710.000,1173.000,710.000C1175.296,710.000,1177.593,710.000,1179.889,710.000C1182.185,710.000,1184.481,710.000,1186.778,710.000C1189.074,710.000,1191.370,710.000,1193.667,710.000C1195.963,710.000,1198.259,710.000,1200.556,710.000C1202.852,710.000,1205.148,710.000,1207.444,710.000C1209.741,710.000,1212.037,710.000,1214.333,710.000C1216.630,710.000,1218.926,710.000,1221.222,710.000C1223.519,710.000,1225.815,710.000,1228.111,710.000C1230.407,710.000,1232.704,710.000,1235.000,710.000C1237.296,710.000,1239.593,710.000,1241.889,710.000C1244.185,710.000,1246.481,710.000,1248.778,710.000C1251.074,710.000,1253.370,710.000,1255.667,710.000C1257.963,710.000,1260.259,710.000,1262.556,710.000C1264.852,710.000,1267.148,710.000,1269.444,710.000C1271.741,710.000,1274.037,710.000,1276.333,710.000C1278.630,710.000,1280.926,710.000,1283.222,710.000C1285.519,710.000,1287.815,710.000,1290.111,710.000C1292.407,710.000,1294.704,710.000,1297.000,710.000C1299.296,710.000,1301.593,710.000,1303.889,710.000C1306.185,710.000,1308.481,710.000,1310.778,710.000C1313.074,710.000,1315.370,598.000,1317.667,598.000C1319.963,598.000,1322.259,710.000,1324.556,710.000C1326.852,710.000,1329.148,710.000,1331.444,710.000C1333.741,710.000,1336.037,710.000,1338.333,710.000C1340.630,710.000,1342.926,710.000,1345.222,710.000C1347.519,710.000,1349.815,710.000,1352.111,710.000C1354.407,710.000,1356.704,710.000,1359.000,710.000C1361.296,710.000,1363.593,710.000,1365.889,710.000C1368.185,710.000,1370.481,710.000,1372.778,710.000C1375.074,710.000,1377.370,598.000,1379.667,598.000C1381.963,598.000,1384.259,682.000,1386.556,682.000C1388.852,682.000,1391.148,654.000,1393.444,654.000C1395.741,654.000,1398.037,710.000,1400.333,710.000C1402.630,710.000,1404.926,710.000,1407.222,710.000C1409.519,710.000,1411.815,710.000,1414.111,710.000C1416.407,710.000,1418.704,710.000,1421.000,710.000C1423.296,710.000,1425.593,710.000,1427.889,710.000C1430.185,710.000,1432.481,710.000,1434.778,710.000C1437.074,710.000,1439.370,710.000,1441.667,710.000C1443.963,710.000,1446.259,710.000,1448.556,710.000C1450.852,710.000,1453.148,710.000,1455.444,710.000C1457.741,710.000,1460.037,710.000,1462.333,710.000C1464.630,710.000,1466.926,710.000,1469.222,710.000C1471.519,710.000,1473.815,710.000,1476.111,710.000C1478.407,710.000,1480.704,710.000,1483.000,710.000L1483.000,710.000C1480.704,710.000,1478.407,710.000,1476.111,710.000C1473.815,710.000,1471.519,710.000,1469.222,710.000C1466.926,710.000,1464.630,710.000,1462.333,710.000C1460.037,710.000,1457.741,710.000,1455.444,710.000C1453.148,710.000,1450.852,710.000,1448.556,710.000C1446.259,710.000,1443.963,710.000,1441.667,710.000C1439.370,710.000,1437.074,710.000,1434.778,710.000C1432.481,710.000,1430.185,710.000,1427.889,710.000C1425.593,710.000,1423.296,710.000,1421.000,710.000C1418.704,710.000,1416.407,710.000,1414.111,710.000C1411.815,710.000,1409.519,710.000,1407.222,710.000C1404.926,710.000,1402.630,710.000,1400.333,710.000C1398.037,710.000,1395.741,710.000,1393.444,710.000C1391.148,710.000,1388.852,710.000,1386.556,710.000C1384.259,710.000,1381.963,654.000,1379.667,654.000C1377.370,654.000,1375.074,710.000,1372.778,710.000C1370.481,710.000,1368.185,710.000,1365.889,710.000C1363.593,710.000,1361.296,710.000,1359.000,710.000C1356.704,710.000,1354.407,710.000,1352.111,710.000C1349.815,710.000,1347.519,710.000,1345.222,710.000C1342.926,710.000,1340.630,710.000,1338.333,710.000C1336.037,710.000,1333.741,710.000,1331.444,710.000C1329.148,710.000,1326.852,710.000,1324.556,710.000C1322.259,710.000,1319.963,626.000,1317.667,626.000C1315.370,626.000,1313.074,710.000,1310.778,710.000C1308.481,710.000,1306.185,710.000,1303.889,710.000C1301.593,710.000,1299.296,710.000,1297.000,710.000C1294.704,710.000,1292.407,710.000,1290.111,710.000C1287.815,710.000,1285.519,710.000,1283.222,710.000C1280.926,710.000,1278.630,710.000,1276.333,710.000C1274.037,710.000,1271.741,710.000,1269.444,710.000C1267.148,710.000,1264.852,710.000,1262.556,710.000C1260.259,710.000,1257.963,710.000,1255.667,710.000C1253.370,710.000,1251.074,710.000,1248.778,710.000C1246.481,710.000,1244.185,710.000,1241.889,710.000C1239.593,710.000,1237.296,710.000,1235.000,710.000C1232.704,710.000,1230.407,710.000,1228.111,710.000C1225.815,710.000,1223.519,710.000,1221.222,710.000C1218.926,710.000,1216.630,710.000,1214.333,710.000C1212.037,710.000,1209.741,710.000,1207.444,710.000C1205.148,710.000,1202.852,710.000,1200.556,710.000C1198.259,710.000,1195.963,710.000,1193.667,710.000C1191.370,710.000,1189.074,710.000,1186.778,710.000C1184.481,710.000,1182.185,710.000,1179.889,710.000C1177.593,710.000,1175.296,710.000,1173.000,710.000C1170.704,710.000,1168.407,710.000,1166.111,710.000C1163.815,710.000,1161.519,710.000,1159.222,710.000C1156.926,710.000,1154.630,710.000,1152.333,710.000C1150.037,710.000,1147.741,710.000,1145.444,710.000C1143.148,710.000,1140.852,710.000,1138.556,710.000C1136.259,710.000,1133.963,710.000,1131.667,710.000C1129.370,710.000,1127.074,710.000,1124.778,710.000C1122.481,710.000,1120.185,710.000,1117.889,710.000C1115.593,710.000,1113.296,710.000,1111.000,710.000C1108.704,710.000,1106.407,710.000,1104.111,710.000C1101.815,710.000,1099.519,710.000,1097.222,710.000C1094.926,710.000,1092.630,710.000,1090.333,710.000C1088.037,710.000,1085.741,710.000,1083.444,710.000C1081.148,710.000,1078.852,710.000,1076.556,710.000C1074.259,710.000,1071.963,588.667,1069.667,570.000C1067.370,551.333,1065.074,542.000,1062.778,542.000C1060.481,542.000,1058.185,710.000,1055.889,710.000C1053.593,710.000,1051.296,710.000,1049.000,710.000C1046.704,710.000,1044.407,710.000,1042.111,710.000C1039.815,710.000,1037.519,710.000,1035.222,710.000C1032.926,710.000,1030.630,710.000,1028.333,710.000C1026.037,710.000,1023.741,710.000,1021.444,710.000C1019.148,710.000,1016.852,710.000,1014.556,710.000C1012.259,710.000,1009.963,710.000,1007.667,710.000C1005.370,710.000,1003.074,710.000,1000.778,710.000C998.481,710.000,996.185,710.000,993.889,710.000C991.593,710.000,989.296,710.000,987.000,710.000C984.704,710.000,982.407,710.000,980.111,710.000C977.815,710.000,975.519,710.000,973.222,710.000C970.926,710.000,968.630,710.000,966.333,710.000C964.037,710.000,961.741,710.000,959.444,710.000C957.148,710.000,954.852,710.000,952.556,710.000C950.259,710.000,947.963,710.000,945.667,710.000C943.370,710.000,941.074,710.000,938.778,710.000C936.481,710.000,934.185,710.000,931.889,710.000C929.593,710.000,927.296,710.000,925.000,710.000C922.704,710.000,920.407,710.000,918.111,710.000C915.815,710.000,913.519,710.000,911.222,710.000C908.926,710.000,906.630,710.000,904.333,710.000C902.037,710.000,899.741,710.000,897.444,710.000C895.148,710.000,892.852,710.000,890.556,710.000C888.259,710.000,885.963,710.000,883.667,710.000C881.370,710.000,879.074,710.000,876.778,710.000C874.481,710.000,872.185,710.000,869.889,710.000C867.593,710.000,865.296,710.000,863.000,710.000Z" fill="url(#gM)" stroke="none"/>
<path d="M863.000,710.000C865.296,710.000,867.593,710.000,869.889,710.000C872.185,710.000,874.481,710.000,876.778,710.000C879.074,710.000,881.370,710.000,883.667,710.000C885.963,710.000,888.259,710.000,890.556,710.000C892.852,710.000,895.148,710.000,897.444,710.000C899.741,710.000,902.037,710.000,904.333,710.000C906.630,710.000,908.926,710.000,911.222,710.000C913.519,710.000,915.815,710.000,918.111,710.000C920.407,710.000,922.704,710.000,925.000,710.000C927.296,710.000,929.593,710.000,931.889,710.000C934.185,710.000,936.481,710.000,938.778,710.000C941.074,710.000,943.370,710.000,945.667,710.000C947.963,710.000,950.259,710.000,952.556,710.000C954.852,710.000,957.148,710.000,959.444,710.000C961.741,710.000,964.037,710.000,966.333,710.000C968.630,710.000,970.926,710.000,973.222,710.000C975.519,710.000,977.815,710.000,980.111,710.000C982.407,710.000,984.704,710.000,987.000,710.000C989.296,710.000,991.593,710.000,993.889,710.000C996.185,710.000,998.481,710.000,1000.778,710.000C1003.074,710.000,1005.370,710.000,1007.667,710.000C1009.963,710.000,1012.259,710.000,1014.556,710.000C1016.852,710.000,1019.148,710.000,1021.444,710.000C1023.741,710.000,1026.037,710.000,1028.333,710.000C1030.630,710.000,1032.926,710.000,1035.222,710.000C1037.519,710.000,1039.815,710.000,1042.111,710.000C1044.407,710.000,1046.704,710.000,1049.000,710.000C1051.296,710.000,1053.593,710.000,1055.889,710.000C1058.185,710.000,1060.481,542.000,1062.778,542.000C1065.074,542.000,1067.370,551.333,1069.667,570.000C1071.963,588.667,1074.259,710.000,1076.556,710.000C1078.852,710.000,1081.148,710.000,1083.444,710.000C1085.741,710.000,1088.037,710.000,1090.333,710.000C1092.630,710.000,1094.926,710.000,1097.222,710.000C1099.519,710.000,1101.815,710.000,1104.111,710.000C1106.407,710.000,1108.704,710.000,1111.000,710.000C1113.296,710.000,1115.593,710.000,1117.889,710.000C1120.185,710.000,1122.481,710.000,1124.778,710.000C1127.074,710.000,1129.370,710.000,1131.667,710.000C1133.963,710.000,1136.259,710.000,1138.556,710.000C1140.852,710.000,1143.148,710.000,1145.444,710.000C1147.741,710.000,1150.037,710.000,1152.333,710.000C1154.630,710.000,1156.926,710.000,1159.222,710.000C1161.519,710.000,1163.815,710.000,1166.111,710.000C1168.407,710.000,1170.704,710.000,1173.000,710.000C1175.296,710.000,1177.593,710.000,1179.889,710.000C1182.185,710.000,1184.481,710.000,1186.778,710.000C1189.074,710.000,1191.370,710.000,1193.667,710.000C1195.963,710.000,1198.259,710.000,1200.556,710.000C1202.852,710.000,1205.148,710.000,1207.444,710.000C1209.741,710.000,1212.037,710.000,1214.333,710.000C1216.630,710.000,1218.926,710.000,1221.222,710.000C1223.519,710.000,1225.815,710.000,1228.111,710.000C1230.407,710.000,1232.704,710.000,1235.000,710.000C1237.296,710.000,1239.593,710.000,1241.889,710.000C1244.185,710.000,1246.481,710.000,1248.778,710.000C1251.074,710.000,1253.370,710.000,1255.667,710.000C1257.963,710.000,1260.259,710.000,1262.556,710.000C1264.852,710.000,1267.148,710.000,1269.444,710.000C1271.741,710.000,1274.037,710.000,1276.333,710.000C1278.630,710.000,1280.926,710.000,1283.222,710.000C1285.519,710.000,1287.815,710.000,1290.111,710.000C1292.407,710.000,1294.704,710.000,1297.000,710.000C1299.296,710.000,1301.593,710.000,1303.889,710.000C1306.185,710.000,1308.481,710.000,1310.778,710.000C1313.074,710.000,1315.370,598.000,1317.667,598.000C1319.963,598.000,1322.259,710.000,1324.556,710.000C1326.852,710.000,1329.148,710.000,1331.444,710.000C1333.741,710.000,1336.037,710.000,1338.333,710.000C1340.630,710.000,1342.926,710.000,1345.222,710.000C1347.519,710.000,1349.815,710.000,1352.111,710.000C1354.407,710.000,1356.704,710.000,1359.000,710.000C1361.296,710.000,1363.593,710.000,1365.889,710.000C1368.185,710.000,1370.481,710.000,1372.778,710.000C1375.074,710.000,1377.370,598.000,1379.667,598.000C1381.963,598.000,1384.259,682.000,1386.556,682.000C1388.852,682.000,1391.148,654.000,1393.444,654.000C1395.741,654.000,1398.037,710.000,1400.333,710.000C1402.630,710.000,1404.926,710.000,1407.222,710.000C1409.519,710.000,1411.815,710.000,1414.111,710.000C1416.407,710.000,1418.704,710.000,1421.000,710.000C1423.296,710.000,1425.593,710.000,1427.889,710.000C1430.185,710.000,1432.481,710.000,1434.778,710.000C1437.074,710.000,1439.370,710.000,1441.667,710.000C1443.963,710.000,1446.259,710.000,1448.556,710.000C1450.852,710.000,1453.148,710.000,1455.444,710.000C1457.741,710.000,1460.037,710.000,1462.333,710.000C1464.630,710.000,1466.926,710.000,1469.222,710.000C1471.519,710.000,1473.815,710.000,1476.111,710.000C1478.407,710.000,1480.704,710.000,1483.000,710.000" fill="none" stroke="#eab308" stroke-width="2" stroke-opacity="0.5"/>
<path d="M863.000,710.000C865.296,710.000,867.593,710.000,869.889,710.000C872.185,710.000,874.481,710.000,876.778,710.000C879.074,710.000,881.370,710.000,883.667,710.000C885.963,710.000,888.259,710.000,890.556,710.000C892.852,710.000,895.148,710.000,897.444,710.000C899.741,710.000,902.037,710.000,904.333,710.000C906.630,710.000,908.926,710.000,911.222,710.000C913.519,710.000,915.815,710.000,918.111,710.000C920.407,710.000,922.704,710.000,925.000,710.000C927.296,710.000,929.593,710.000,931.889,710.000C934.185,710.000,936.481,710.000,938.778,710.000C941.074,710.000,943.370,710.000,945.667,710.000C947.963,710.000,950.259,710.000,952.556,710.000C954.852,710.000,957.148,710.000,959.444,710.000C961.741,710.000,964.037,710.000,966.333,710.000C968.630,710.000,970.926,710.000,973.222,710.000C975.519,710.000,977.815,710.000,980.111,710.000C982.407,710.000,984.704,710.000,987.000,710.000C989.296,710.000,991.593,710.000,993.889,710.000C996.185,710.000,998.481,710.000,1000.778,710.000C1003.074,710.000,1005.370,710.000,1007.667,710.000C1009.963,710.000,1012.259,710.000,1014.556,710.000C1016.852,710.000,1019.148,710.000,1021.444,710.000C1023.741,710.000,1026.037,710.000,1028.333,710.000C1030.630,710.000,1032.926,710.000,1035.222,710.000C1037.519,710.000,1039.815,710.000,1042.111,710.000C1044.407,710.000,1046.704,710.000,1049.000,710.000C1051.296,710.000,1053.593,710.000,1055.889,710.000C1058.185,710.000,1060.481,542.000,1062.778,542.000C1065.074,542.000,1067.370,551.333,1069.667,570.000C1071.963,588.667,1074.259,710.000,1076.556,710.000C1078.852,710.000,1081.148,710.000,1083.444,710.000C1085.741,710.000,1088.037,710.000,1090.333,710.000C1092.630,710.000,1094.926,710.000,1097.222,710.000C1099.519,710.000,1101.815,710.000,1104.111,710.000C1106.407,710.000,1108.704,710.000,1111.000,710.000C1113.296,710.000,1115.593,710.000,1117.889,710.000C1120.185,710.000,1122.481,710.000,1124.778,710.000C1127.074,710.000,1129.370,710.000,1131.667,710.000C1133.963,710.000,1136.259,710.000,1138.556,710.000C1140.852,710.000,1143.148,710.000,1145.444,710.000C1147.741,710.000,1150.037,710.000,1152.333,710.000C1154.630,710.000,1156.926,710.000,1159.222,710.000C1161.519,710.000,1163.815,710.000,1166.111,710.000C1168.407,710.000,1170.704,710.000,1173.000,710.000C1175.296,710.000,1177.593,710.000,1179.889,710.000C1182.185,710.000,1184.481,710.000,1186.778,710.000C1189.074,710.000,1191.370,710.000,1193.667,710.000C1195.963,710.000,1198.259,710.000,1200.556,710.000C1202.852,710.000,1205.148,710.000,1207.444,710.000C1209.741,710.000,1212.037,710.000,1214.333,710.000C1216.630,710.000,1218.926,710.000,1221.222,710.000C1223.519,710.000,1225.815,710.000,1228.111,710.000C1230.407,710.000,1232.704,710.000,1235.000,710.000C1237.296,710.000,1239.593,710.000,1241.889,710.000C1244.185,710.000,1246.481,710.000,1248.778,710.000C1251.074,710.000,1253.370,710.000,1255.667,710.000C1257.963,710.000,1260.259,710.000,1262.556,710.000C1264.852,710.000,1267.148,710.000,1269.444,710.000C1271.741,710.000,1274.037,710.000,1276.333,710.000C1278.630,710.000,1280.926,710.000,1283.222,710.000C1285.519,710.000,1287.815,710.000,1290.111,710.000C1292.407,710.000,1294.704,710.000,1297.000,710.000C1299.296,710.000,1301.593,710.000,1303.889,710.000C1306.185,710.000,1308.481,710.000,1310.778,710.000C1313.074,710.000,1315.370,598.000,1317.667,598.000C1319.963,598.000,1322.259,710.000,1324.556,710.000C1326.852,710.000,1329.148,710.000,1331.444,710.000C1333.741,710.000,1336.037,710.000,1338.333,710.000C1340.630,710.000,1342.926,710.000,1345.222,710.000C1347.519,710.000,1349.815,710.000,1352.111,710.000C1354.407,710.000,1356.704,710.000,1359.000,710.000C1361.296,710.000,1363.593,710.000,1365.889,710.000C1368.185,710.000,1370.481,710.000,1372.778,710.000C1375.074,710.000,1377.370,598.000,1379.667,598.000C1381.963,598.000,1384.259,682.000,1386.556,682.000C1388.852,682.000,1391.148,654.000,1393.444,654.000C1395.741,654.000,1398.037,710.000,1400.333,710.000C1402.630,710.000,1404.926,710.000,1407.222,710.000C1409.519,710.000,1411.815,710.000,1414.111,710.000C1416.407,710.000,1418.704,710.000,1421.000,710.000C1423.296,710.000,1425.593,710.000,1427.889,710.000C1430.185,710.000,1432.481,710.000,1434.778,710.000C1437.074,710.000,1439.370,710.000,1441.667,710.000C1443.963,710.000,1446.259,710.000,1448.556,710.000C1450.852,710.000,1453.148,710.000,1455.444,710.000C1457.741,710.000,1460.037,710.000,1462.333,710.000C1464.630,710.000,1466.926,710.000,1469.222,710.000C1471.519,710.000,1473.815,710.000,1476.111,710.000C1478.407,710.000,1480.704,710.000,1483.000,710.000L1483.000,710.000C1480.704,710.000,1478.407,710.000,1476.111,710.000C1473.815,710.000,1471.519,710.000,1469.222,710.000C1466.926,710.000,1464.630,710.000,1462.333,710.000C1460.037,710.000,1457.741,710.000,1455.444,710.000C1453.148,710.000,1450.852,710.000,1448.556,710.000C1446.259,710.000,1443.963,710.000,1441.667,710.000C1439.370,710.000,1437.074,710.000,1434.778,710.000C1432.481,710.000,1430.185,710.000,1427.889,710.000C1425.593,710.000,1423.296,710.000,1421.000,710.000C1418.704,710.000,1416.407,710.000,1414.111,710.000C1411.815,710.000,1409.519,710.000,1407.222,710.000C1404.926,710.000,1402.630,710.000,1400.333,710.000C1398.037,710.000,1395.741,654.000,1393.444,654.000C1391.148,654.000,1388.852,682.000,1386.556,682.000C1384.259,682.000,1381.963,598.000,1379.667,598.000C1377.370,598.000,1375.074,710.000,1372.778,710.000C1370.481,710.000,1368.185,710.000,1365.889,710.000C1363.593,710.000,1361.296,710.000,1359.000,710.000C1356.704,710.000,1354.407,710.000,1352.111,710.000C1349.815,710.000,1347.519,710.000,1345.222,710.000C1342.926,710.000,1340.630,710.000,1338.333,710.000C1336.037,710.000,1333.741,710.000,1331.444,710.000C1329.148,710.000,1326.852,710.000,1324.556,710.000C1322.259,710.000,1319.963,598.000,1317.667,598.000C1315.370,598.000,1313.074,710.000,1310.778,710.000C1308.481,710.000,1306.185,710.000,1303.889,710.000C1301.593,710.000,1299.296,710.000,1297.000,710.000C1294.704,710.000,1292.407,710.000,1290.111,710.000C1287.815,710.000,1285.519,710.000,1283.222,710.000C1280.926,710.000,1278.630,710.000,1276.333,710.000C1274.037,710.000,1271.741,710.000,1269.444,710.000C1267.148,710.000,1264.852,710.000,1262.556,710.000C1260.259,710.000,1257.963,710.000,1255.667,710.000C1253.370,710.000,1251.074,710.000,1248.778,710.000C1246.481,710.000,1244.185,710.000,1241.889,710.000C1239.593,710.000,1237.296,710.000,1235.000,710.000C1232.704,710.000,1230.407,710.000,1228.111,710.000C1225.815,710.000,1223.519,710.000,1221.222,710.000C1218.926,710.000,1216.630,710.000,1214.333,710.000C1212.037,710.000,1209.741,710.000,1207.444,710.000C1205.148,710.000,1202.852,710.000,1200.556,710.000C1198.259,710.000,1195.963,710.000,1193.667,710.000C1191.370,710.000,1189.074,710.000,1186.778,710.000C1184.481,710.000,1182.185,710.000,1179.889,710.000C1177.593,710.000,1175.296,710.000,1173.000,710.000C1170.704,710.000,1168.407,710.000,1166.111,710.000C1163.815,710.000,1161.519,710.000,1159.222,710.000C1156.926,710.000,1154.630,710.000,1152.333,710.000C1150.037,710.000,1147.741,710.000,1145.444,710.000C1143.148,710.000,1140.852,710.000,1138.556,710.000C1136.259,710.000,1133.963,710.000,1131.667,710.000C1129.370,710.000,1127.074,710.000,1124.778,710.000C1122.481,710.000,1120.185,710.000,1117.889,710.000C1115.593,710.000,1113.296,710.000,1111.000,710.000C1108.704,710.000,1106.407,710.000,1104.111,710.000C1101.815,710.000,1099.519,710.000,1097.222,710.000C1094.926,710.000,1092.630,710.000,1090.333,710.000C1088.037,710.000,1085.741,710.000,1083.444,710.000C1081.148,710.000,1078.852,710.000,1076.556,710.000C1074.259,710.000,1071.963,588.667,1069.667,570.000C1067.370,551.333,1065.074,542.000,1062.778,542.000C1060.481,542.000,1058.185,710.000,1055.889,710.000C1053.593,710.000,1051.296,710.000,1049.000,710.000C1046.704,710.000,1044.407,710.000,1042.111,710.000C1039.815,710.000,1037.519,710.000,1035.222,710.000C1032.926,710.000,1030.630,710.000,1028.333,710.000C1026.037,710.000,1023.741,710.000,1021.444,710.000C1019.148,710.000,1016.852,710.000,1014.556,710.000C1012.259,710.000,1009.963,710.000,1007.667,710.000C1005.370,710.000,1003.074,710.000,1000.778,710.000C998.481,710.000,996.185,710.000,993.889,710.000C991.593,710.000,989.296,710.000,987.000,710.000C984.704,710.000,982.407,710.000,980.111,710.000C977.815,710.000,975.519,710.000,973.222,710.000C970.926,710.000,968.630,710.000,966.333,710.000C964.037,710.000,961.741,710.000,959.444,710.000C957.148,710.000,954.852,710.000,952.556,710.000C950.259,710.000,947.963,710.000,945.667,710.000C943.370,710.000,941.074,710.000,938.778,710.000C936.481,710.000,934.185,710.000,931.889,710.000C929.593,710.000,927.296,710.000,925.000,710.000C922.704,710.000,920.407,710.000,918.111,710.000C915.815,710.000,913.519,710.000,911.222,710.000C908.926,710.000,906.630,710.000,904.333,710.000C902.037,710.000,899.741,710.000,897.444,710.000C895.148,710.000,892.852,710.000,890.556,710.000C888.259,710.000,885.963,710.000,883.667,710.000C881.370,710.000,879.074,710.000,876.778,710.000C874.481,710.000,872.185,710.000,869.889,710.000C867.593,710.000,865.296,710.000,863.000,710.000Z" fill="url(#gL)" stroke="none"/>
<path d="M863.000,710.000C865.296,710.000,867.593,710.000,869.889,710.000C872.185,710.000,874.481,710.000,876.778,710.000C879.074,710.000,881.370,710.000,883.667,710.000C885.963,710.000,888.259,710.000,890.556,710.000C892.852,710.000,895.148,710.000,897.444,710.000C899.741,710.000,902.037,710.000,904.333,710.000C906.630,710.000,908.926,710.000,911.222,710.000C913.519,710.000,915.815,710.000,918.111,710.000C920.407,710.000,922.704,710.000,925.000,710.000C927.296,710.000,929.593,710.000,931.889,710.000C934.185,710.000,936.481,710.000,938.778,710.000C941.074,710.000,943.370,710.000,945.667,710.000C947.963,710.000,950.259,710.000,952.556,710.000C954.852,710.000,957.148,710.000,959.444,710.000C961.741,710.000,964.037,710.000,966.333,710.000C968.630,710.000,970.926,710.000,973.222,710.000C975.519,710.000,977.815,710.000,980.111,710.000C982.407,710.000,984.704,710.000,987.000,710.000C989.296,710.000,991.593,710.000,993.889,710.000C996.185,710.000,998.481,710.000,1000.778,710.000C1003.074,710.000,1005.370,710.000,1007.667,710.000C1009.963,710.000,1012.259,710.000,1014.556,710.000C1016.852,710.000,1019.148,710.000,1021.444,710.000C1023.741,710.000,1026.037,710.000,1028.333,710.000C1030.630,710.000,1032.926,710.000,1035.222,710.000C1037.519,710.000,1039.815,710.000,1042.111,710.000C1044.407,710.000,1046.704,710.000,1049.000,710.000C1051.296,710.000,1053.593,710.000,1055.889,710.000C1058.185,710.000,1060.481,542.000,1062.778,542.000C1065.074,542.000,1067.370,551.333,1069.667,570.000C1071.963,588.667,1074.259,710.000,1076.556,710.000C1078.852,710.000,1081.148,710.000,1083.444,710.000C1085.741,710.000,1088.037,710.000,1090.333,710.000C1092.630,710.000,1094.926,710.000,1097.222,710.000C1099.519,710.000,1101.815,710.000,1104.111,710.000C1106.407,710.000,1108.704,710.000,1111.000,710.000C1113.296,710.000,1115.593,710.000,1117.889,710.000C1120.185,710.000,1122.481,710.000,1124.778,710.000C1127.074,710.000,1129.370,710.000,1131.667,710.000C1133.963,710.000,1136.259,710.000,1138.556,710.000C1140.852,710.000,1143.148,710.000,1145.444,710.000C1147.741,710.000,1150.037,710.000,1152.333,710.000C1154.630,710.000,1156.926,710.000,1159.222,710.000C1161.519,710.000,1163.815,710.000,1166.111,710.000C1168.407,710.000,1170.704,710.000,1173.000,710.000C1175.296,710.000,1177.593,710.000,1179.889,710.000C1182.185,710.000,1184.481,710.000,1186.778,710.000C1189.074,710.000,1191.370,710.000,1193.667,710.000C1195.963,710.000,1198.259,710.000,1200.556,710.000C1202.852,710.000,1205.148,710.000,1207.444,710.000C1209.741,710.000,1212.037,710.000,1214.333,710.000C1216.630,710.000,1218.926,710.000,1221.222,710.000C1223.519,710.000,1225.815,710.000,1228.111,710.000C1230.407,710.000,1232.704,710.000,1235.000,710.000C1237.296,710.000,1239.593,710.000,1241.889,710.000C1244.185,710.000,1246.481,710.000,1248.778,710.000C1251.074,710.000,1253.370,710.000,1255.667,710.000C1257.963,710.000,1260.259,710.000,1262.556,710.000C1264.852,710.000,1267.148,710.000,1269.444,710.000C1271.741,710.000,1274.037,710.000,1276.333,710.000C1278.630,710.000,1280.926,710.000,1283.222,710.000C1285.519,710.000,1287.815,710.000,1290.111,710.000C1292.407,710.000,1294.704,710.000,1297.000,710.000C1299.296,710.000,1301.593,710.000,1303.889,710.000C1306.185,710.000,1308.481,710.000,1310.778,710.000C1313.074,710.000,1315.370,598.000,1317.667,598.000C1319.963,598.000,1322.259,710.000,1324.556,710.000C1326.852,710.000,1329.148,710.000,1331.444,710.000C1333.741,710.000,1336.037,710.000,1338.333,710.000C1340.630,710.000,1342.926,710.000,1345.222,710.000C1347.519,710.000,1349.815,710.000,1352.111,710.000C1354.407,710.000,1356.704,710.000,1359.000,710.000C1361.296,710.000,1363.593,710.000,1365.889,710.000C1368.185,710.000,1370.481,710.000,1372.778,710.000C1375.074,710.000,1377.370,598.000,1379.667,598.000C1381.963,598.000,1384.259,682.000,1386.556,682.000C1388.852,682.000,1391.148,654.000,1393.444,654.000C1395.741,654.000,1398.037,710.000,1400.333,710.000C1402.630,710.000,1404.926,710.000,1407.222,710.000C1409.519,710.000,1411.815,710.000,1414.111,710.000C1416.407,710.000,1418.704,710.000,1421.000,710.000C1423.296,710.000,1425.593,710.000,1427.889,710.000C1430.185,710.000,1432.481,710.000,1434.778,710.000C1437.074,710.000,1439.370,710.000,1441.667,710.000C1443.963,710.000,1446.259,710.000,1448.556,710.000C1450.852,710.000,1453.148,710.000,1455.444,710.000C1457.741,710.000,1460.037,710.000,1462.333,710.000C1464.630,710.000,1466.926,710.000,1469.222,710.000C1471.519,710.000,1473.815,710.000,1476.111,710.000C1478.407,710.000,1480.704,710.000,1483.000,710.000" fill="none" stroke="#3b82f6" stroke-width="2" stroke-opacity="0.5"/>
<g transform="translate(996.2,457) scale(0.4375)"><path stroke-width="4" fill="none" stroke="#ef4444" d="M0,16h10.666666666666666A5.333333333333333,5.333333333333333,0,1,1,21.333333333333332,16H32M21.333333333333332,16A5.333333333333333,5.333333333333333,0,1,1,10.666666666666666,16"/></g>
<g transform="translate(1077,457) scale(0.4375)"><path stroke-width="4" fill="none" stroke="#f97316" d="M0,16h10.666666666666666A5.333333333333333,5.333333333333333,0,1,1,21.333333333333332,16H32M21.333333333333332,16A5.333333333333333,5.333333333333333,0,1,1,10.666666666666666,16"/></g>
<g transform="translate(1140.1,457) scale(0.4375)"><path stroke-width="4" fill="none" stroke="#eab308" d="M0,16h10.666666666666666A5.333333333333333,5.333333333333333,0,1,1,21.333333333333332,16H32M21.333333333333332,16A5.333333333333333,5.333333333333333,0,1,1,10.666666666666666,16"/></g>
<g transform="translate(1229.3,457) scale(0.4375)"><path stroke-width="4" fill="none" stroke="#3b82f6" d="M0,16h10.666666666666666A5.333333333333333,5.333333333333333,0,1,1,21.333333333333332,16H32M21.333333333333332,16A5.333333333333333,5.333333333333333,0,1,1,10.666666666666666,16"/></g>
</svg>
<div class="t" style="left:879.19px;top:717.00px;font-size:12px;font-weight:400;color:#939dae;letter-spacing:-0.125px;">11 nov.</div>
<div class="t" style="left:925.92px;top:717.00px;font-size:12px;font-weight:400;color:#939dae;letter-spacing:0.227px;">18 nov.</div>
<div class="t" style="left:973.39px;top:717.00px;font-size:12px;font-weight:400;color:#939dae;letter-spacing:0.477px;">25 nov.</div>
<div class="t" style="left:1025.11px;top:717.00px;font-size:12px;font-weight:400;color:#939dae;letter-spacing:0.329px;">2 déc.</div>
<div class="t" style="left:1066.19px;top:717.00px;font-size:12px;font-weight:400;color:#939dae;letter-spacing:0.429px;">8 déc.</div>
<div class="t" style="left:1111.92px;top:717.00px;font-size:12px;font-weight:400;color:#939dae;letter-spacing:0.078px;">15 déc.</div>
<div class="t" style="left:1158.89px;top:717.00px;font-size:12px;font-weight:400;color:#939dae;letter-spacing:0.495px;">22 déc.</div>
<div class="t" style="left:1207.11px;top:717.00px;font-size:12px;font-weight:400;color:#939dae;letter-spacing:0.495px;">29 déc.</div>
<div class="t" style="left:1258.33px;top:717.00px;font-size:12px;font-weight:400;color:#939dae;letter-spacing:0.312px;">5 janv.</div>
<div class="t" style="left:1304.06px;top:717.00px;font-size:12px;font-weight:400;color:#939dae;letter-spacing:0.028px;">12 janv.</div>
<div class="t" style="left:1352.28px;top:717.00px;font-size:12px;font-weight:400;color:#939dae;letter-spacing:0.028px;">19 janv.</div>
<div class="t" style="left:1399.25px;top:717.00px;font-size:12px;font-weight:400;color:#939dae;letter-spacing:0.385px;">26 janv.</div>
<div class="t" style="left:1452.50px;top:717.00px;font-size:12px;font-weight:400;color:#939dae;letter-spacing:0.442px;">4 févr.</div>
<div class="t" style="left:848.20px;top:704.00px;font-size:12px;font-weight:400;color:#939dae;letter-spacing:0px;transform:scaleX(0.9714);transform-origin:0 0;">0</div>
<div class="t" style="left:848.20px;top:648.00px;font-size:12px;font-weight:400;color:#939dae;letter-spacing:0px;transform:scaleX(0.9714);transform-origin:0 0;">2</div>
<div class="t" style="left:848.20px;top:592.00px;font-size:12px;font-weight:400;color:#939dae;letter-spacing:0px;transform:scaleX(0.9714);transform-origin:0 0;">4</div>
<div class="t" style="left:848.20px;top:536.00px;font-size:12px;font-weight:400;color:#939dae;letter-spacing:0px;transform:scaleX(0.9714);transform-origin:0 0;">6</div>
<div class="t" style="left:848.20px;top:480.00px;font-size:12px;font-weight:400;color:#939dae;letter-spacing:0px;transform:scaleX(0.9714);transform-origin:0 0;">8</div>
<div class="t" style="left:1015.20px;top:455.00px;font-size:16px;font-weight:400;color:#ef4444;letter-spacing:0.523px;">Critical</div>
<div class="t" style="left:1095.20px;top:455.00px;font-size:16px;font-weight:400;color:#f97316;letter-spacing:1.031px;">High</div>
<div class="t" style="left:1158.10px;top:455.00px;font-size:16px;font-weight:400;color:#eab308;letter-spacing:0.804px;">Medium</div>
<div class="t" style="left:1246.20px;top:455.00px;font-size:16px;font-weight:400;color:#3b82f6;letter-spacing:1.152px;">Low</div>
<div class="b" style="left:9px;top:802px;width:1504px;height:175px;border-radius:8px;border:1px solid #2d394b;background:#0f1b29"></div>
<div class="b" style="left:10px;top:879px;width:1502px;height:1px;background:#2d394b"></div>
<div class="t" style="left:33.60px;top:831.00px;font-size:20px;font-weight:700;color:#ffffff;letter-spacing:-0.73px;">Your </div>
<div class="t" style="left:81.00px;top:831.00px;font-size:20px;font-weight:700;color:#ffffff;letter-spacing:-0.569px;">Organizations</div>
<div class="t" style="left:34.00px;top:911.00px;font-size:16px;font-weight:700;color:#ffffff;letter-spacing:0.863px;">Varden </div>
<div class="t" style="left:96.00px;top:911.00px;font-size:16px;font-weight:700;color:#ffffff;letter-spacing:0.48px;">Security</div>
<div class="t" style="left:34.00px;top:936.00px;font-size:14px;font-weight:400;color:#8494a8;letter-spacing:0.639px;">varden-security.eu </div>
<div class="t" style="left:174.90px;top:936.00px;font-size:14px;font-weight:400;color:#8494a8;letter-spacing:0.254px;">free </div>
<div class="t" style="left:205.70px;top:936.00px;font-size:14px;font-weight:400;color:#8494a8;letter-spacing:0.271px;">tier</div>
<div class="b" style="left:164.75px;top:941.75px;width:4.5px;height:4.5px;border-radius:50%;background:#8494a8"></div>
<div class="b" style="left:1361px;top:908px;width:127px;height:40px;border-radius:8px;background:#06d7ff"></div>
<div class="t" style="left:1377.60px;top:921.00px;font-size:16px;font-weight:400;color:#16304d;letter-spacing:0.521px;text-shadow:0.3px 0 0 #16304d;">View </div>
<div class="t" style="left:1419.00px;top:921.00px;font-size:16px;font-weight:400;color:#16304d;letter-spacing:0.499px;text-shadow:0.3px 0 0 #16304d;">Details</div>
<div class="b" style="left:9px;top:1009px;width:1504px;height:320px;border-radius:8px;border:1px solid #2d394b;background:#0f1b29"></div>
<div class="b" style="left:10px;top:1086px;width:1502px;height:1px;background:#2d394b"></div>
<div class="b" style="left:10px;top:1197px;width:1502px;height:1px;background:#2d394b"></div>
<div class="t" style="left:33.50px;top:1038.00px;font-size:20px;font-weight:700;color:#ffffff;letter-spacing:-0.666px;">Recent </div>
<div class="t" style="left:102.70px;top:1038.00px;font-size:20px;font-weight:700;color:#ffffff;letter-spacing:-0.826px;">Scans</div>
<div class="t" style="left:25.80px;top:1108.00px;font-size:16px;font-weight:700;color:#ffffff;letter-spacing:-0.442px;">test </div>
<div class="t" style="left:58.80px;top:1108.00px;font-size:16px;font-weight:700;color:#ffffff;letter-spacing:-0.197px;">bulk </div>
<div class="t" style="left:96.80px;top:1108.00px;font-size:16px;font-weight:700;color:#ffffff;letter-spacing:0.035px;">scan </div>
<div class="t" style="left:137.80px;top:1108.00px;font-size:16px;font-weight:700;color:#ffffff;letter-spacing:0px;transform:scaleX(1.3600);transform-origin:0 0;">- </div>
<div class="t" style="left:148.80px;top:1108.00px;font-size:16px;font-weight:700;color:#ffffff;letter-spacing:1.072px;">My </div>
<div class="t" style="left:178.80px;top:1108.00px;font-size:16px;font-weight:700;color:#ffffff;letter-spacing:-0.082px;">website </div>
<div class="t" style="left:243.40px;top:1108.00px;font-size:16px;font-weight:700;color:#ffffff;letter-spacing:0.921px;">(2026-01-22)</div>
<svg class="ic" style="left:358px;top:1107px" width="16" height="16" viewBox="0 0 24 24" stroke="#4ade80"><path d="M22 11.08V12a10 10 0 1 1-5.93-9.14"/><path d="m9 11 3 3L22 4"/></svg>
<div class="t" style="left:378.50px;top:1109.00px;font-size:14px;font-weight:400;color:#94a3b8;letter-spacing:0.51px;">Completed</div>
<div class="t" style="left:25.90px;top:1135.00px;font-size:14px;font-weight:400;color:#5d6e85;letter-spacing:0.662px;">varden-security.eu</div>
<div class="b" style="left:167.80px;top:1140.10px;width:4.4px;height:4.4px;border-radius:50%;background:#4a586d"></div>
<div class="t" style="left:190.20px;top:1135.00px;font-size:14px;font-weight:400;color:#5d6e85;letter-spacing:0.496px;">Varden </div>
<div class="t" style="left:241.00px;top:1135.00px;font-size:14px;font-weight:400;color:#5d6e85;letter-spacing:0.49px;">Security</div>
<div class="b" style="left:311.80px;top:1140.10px;width:4.4px;height:4.4px;border-radius:50%;background:#4a586d"></div>
<div class="t" style="left:334.00px;top:1135.00px;font-size:14px;font-weight:400;color:#5d6e85;letter-spacing:0.635px;">22/01/2026</div>
<div class="b" style="left:26px;top:1159px;width:73px;height:22px;border-radius:4px;border:1px solid #b35b38;background:#4d281d"></div>
<div class="t" style="left:34.90px;top:1165.00px;font-size:12px;font-weight:700;color:#fb923c;letter-spacing:-0.039px;">1 Medium</div>
<div class="b" style="left:1403px;top:1126px;width:57px;height:32px;border-radius:4px;background:#334155"></div>
<div class="t" style="left:1415.50px;top:1136.00px;font-size:14px;font-weight:400;color:#dbe3ee;letter-spacing:0.34px;">View</div>
<svg class="ic" style="left:1474px;top:1134px" width="16" height="16" viewBox="0 0 24 24" stroke="#64748b"><path d="M3 6h18"/><path d="M19 6v14c0 1-1 2-2 2H7c-1 0-2-1-2-2V6"/><path d="M8 6V4c0-1 1-2 2-2h4c1 0 2 1 2 2v2"/><line x1="10" x2="10" y1="11" y2="17"/><line x1="14" x2="14" y1="11" y2="17"/></svg>
<div class="t" style="left:25.80px;top:1219.00px;font-size:16px;font-weight:700;color:#ffffff;letter-spacing:-0.442px;">test </div>
<div class="t" style="left:58.80px;top:1219.00px;font-size:16px;font-weight:700;color:#ffffff;letter-spacing:-0.197px;">bulk </div>
<div class="t" style="left:96.80px;top:1219.00px;font-size:16px;font-weight:700;color:#ffffff;letter-spacing:0.035px;">scan </div>
<div class="t" style="left:137.80px;top:1219.00px;font-size:16px;font-weight:700;color:#ffffff;letter-spacing:0px;transform:scaleX(1.3600);transform-origin:0 0;">- </div>
<div class="t" style="left:150.60px;top:1219.00px;font-size:16px;font-weight:700;color:#ffffff;letter-spacing:-0.032px;">website </div>
<div class="t" style="left:213.00px;top:1219.00px;font-size:16px;font-weight:700;color:#ffffff;letter-spacing:0.305px;">mathieu </div>
<div class="t" style="left:281.00px;top:1219.00px;font-size:16px;font-weight:700;color:#ffffff;letter-spacing:0.921px;">(2026-01-22)</div>
<svg class="ic" style="left:396px;top:1218px" width="16" height="16" viewBox="0 0 24 24" stroke="#4ade80"><path d="M22 11.08V12a10 10 0 1 1-5.93-9.14"/><path d="m9 11 3 3L22 4"/></svg>
<div class="t" style="left:416.50px;top:1220.00px;font-size:14px;font-weight:400;color:#94a3b8;letter-spacing:0.573px;">Completed</div>
<div class="t" style="left:25.90px;top:1246.00px;font-size:14px;font-weight:400;color:#5d6e85;letter-spacing:0.444px;">mathieumichel.be</div>
<div class="b" style="left:159.30px;top:1251.10px;width:4.4px;height:4.4px;border-radius:50%;background:#4a586d"></div>
<div class="t" style="left:182.20px;top:1246.00px;font-size:14px;font-weight:400;color:#5d6e85;letter-spacing:0.496px;">Varden </div>
<div class="t" style="left:233.00px;top:1246.00px;font-size:14px;font-weight:400;color:#5d6e85;letter-spacing:0.418px;">Security</div>
<div class="b" style="left:303.80px;top:1251.10px;width:4.4px;height:4.4px;border-radius:50%;background:#4a586d"></div>
<div class="t" style="left:326.00px;top:1246.00px;font-size:14px;font-weight:400;color:#5d6e85;letter-spacing:0.58px;">22/01/2026</div>
<div class="b" style="left:26px;top:1270px;width:73px;height:22px;border-radius:4px;border:1px solid #b35b38;background:#4d281d"></div>
<div class="t" style="left:34.90px;top:1276.00px;font-size:12px;font-weight:700;color:#fb923c;letter-spacing:-0.039px;">1 Medium</div>
<div class="b" style="left:1403px;top:1237px;width:57px;height:32px;border-radius:4px;background:#334155"></div>
<div class="t" style="left:1415.50px;top:1247.00px;font-size:14px;font-weight:400;color:#dbe3ee;letter-spacing:0.34px;">View</div>
<svg class="ic" style="left:1474px;top:1245px" width="16" height="16" viewBox="0 0 24 24" stroke="#64748b"><path d="M3 6h18"/><path d="M19 6v14c0 1-1 2-2 2H7c-1 0-2-1-2-2V6"/><path d="M8 6V4c0-1 1-2 2-2h4c1 0 2 1 2 2v2"/><line x1="10" x2="10" y1="11" y2="17"/><line x1="14" x2="14" y1="11" y2="17"/></svg>
</body></html>
